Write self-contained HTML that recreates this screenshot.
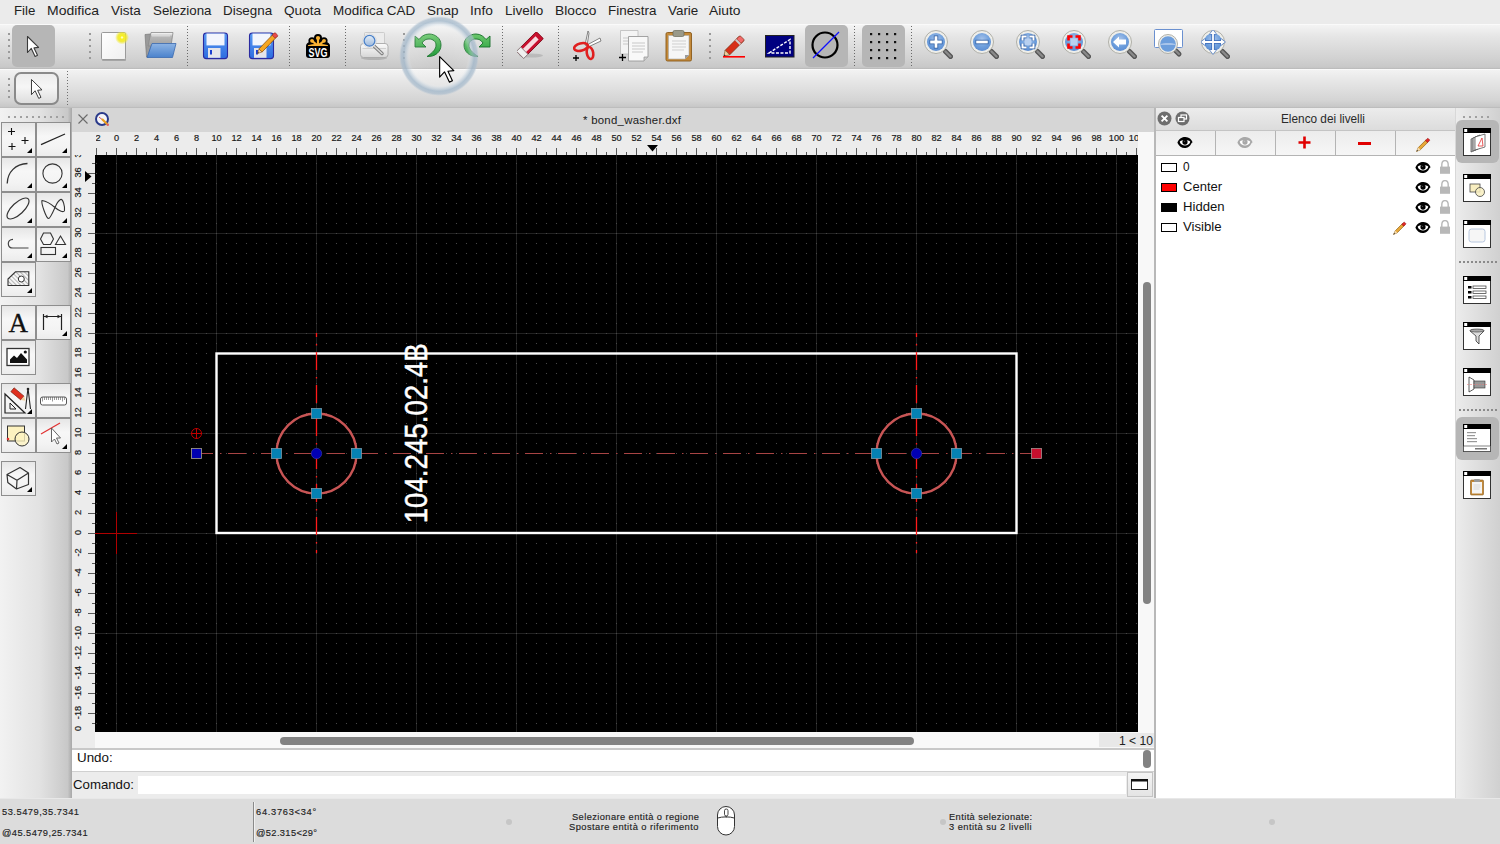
<!DOCTYPE html><html><head><meta charset="utf-8"><style>
*{margin:0;padding:0;box-sizing:border-box}
html,body{width:1500px;height:844px;overflow:hidden;background:#ececec;font-family:"Liberation Sans", sans-serif;position:relative}
.a{position:absolute}
.t{position:absolute;white-space:nowrap;line-height:1}
</style></head><body><div class="a" style="left:0;top:0;width:1500px;height:24px;background:#ebebeb"></div><svg class="a" style="left:11.5px;top:0.2699999999999978px;overflow:visible" width="25.4" height="19.950000000000003"><text x="2" y="14.630000000000003" font-family="Liberation Sans" font-size="13.3" font-weight="normal" fill="#222" textLength="21.4" lengthAdjust="spacingAndGlyphs" >File</text></svg><svg class="a" style="left:44.6px;top:0.2699999999999978px;overflow:visible" width="55.99999999999999" height="19.950000000000003"><text x="2" y="14.630000000000003" font-family="Liberation Sans" font-size="13.3" font-weight="normal" fill="#222" textLength="51.99999999999999" lengthAdjust="spacingAndGlyphs" >Modifica</text></svg><svg class="a" style="left:108.8px;top:0.2699999999999978px;overflow:visible" width="33.8" height="19.950000000000003"><text x="2" y="14.630000000000003" font-family="Liberation Sans" font-size="13.3" font-weight="normal" fill="#222" textLength="29.799999999999997" lengthAdjust="spacingAndGlyphs" >Vista</text></svg><svg class="a" style="left:150.5px;top:0.2699999999999978px;overflow:visible" width="62.5" height="19.950000000000003"><text x="2" y="14.630000000000003" font-family="Liberation Sans" font-size="13.3" font-weight="normal" fill="#222" textLength="58.5" lengthAdjust="spacingAndGlyphs" >Seleziona</text></svg><svg class="a" style="left:220.7px;top:0.2699999999999978px;overflow:visible" width="53.10000000000002" height="19.950000000000003"><text x="2" y="14.630000000000003" font-family="Liberation Sans" font-size="13.3" font-weight="normal" fill="#222" textLength="49.10000000000002" lengthAdjust="spacingAndGlyphs" >Disegna</text></svg><svg class="a" style="left:281.5px;top:0.2699999999999978px;overflow:visible" width="41.10000000000002" height="19.950000000000003"><text x="2" y="14.630000000000003" font-family="Liberation Sans" font-size="13.3" font-weight="normal" fill="#222" textLength="37.10000000000002" lengthAdjust="spacingAndGlyphs" >Quota</text></svg><svg class="a" style="left:330.70000000000005px;top:0.2699999999999978px;overflow:visible" width="86.29999999999995" height="19.950000000000003"><text x="2" y="14.630000000000003" font-family="Liberation Sans" font-size="13.3" font-weight="normal" fill="#222" textLength="82.29999999999995" lengthAdjust="spacingAndGlyphs" >Modifica CAD</text></svg><svg class="a" style="left:424.70000000000005px;top:0.2699999999999978px;overflow:visible" width="35.5" height="19.950000000000003"><text x="2" y="14.630000000000003" font-family="Liberation Sans" font-size="13.3" font-weight="normal" fill="#222" textLength="31.5" lengthAdjust="spacingAndGlyphs" >Snap</text></svg><svg class="a" style="left:467.70000000000005px;top:0.2699999999999978px;overflow:visible" width="26.899999999999977" height="19.950000000000003"><text x="2" y="14.630000000000003" font-family="Liberation Sans" font-size="13.3" font-weight="normal" fill="#222" textLength="22.899999999999977" lengthAdjust="spacingAndGlyphs" >Info</text></svg><svg class="a" style="left:502.70000000000005px;top:0.2699999999999978px;overflow:visible" width="42.299999999999955" height="19.950000000000003"><text x="2" y="14.630000000000003" font-family="Liberation Sans" font-size="13.3" font-weight="normal" fill="#222" textLength="38.299999999999955" lengthAdjust="spacingAndGlyphs" >Livello</text></svg><svg class="a" style="left:552.7px;top:0.2699999999999978px;overflow:visible" width="45.299999999999955" height="19.950000000000003"><text x="2" y="14.630000000000003" font-family="Liberation Sans" font-size="13.3" font-weight="normal" fill="#222" textLength="41.299999999999955" lengthAdjust="spacingAndGlyphs" >Blocco</text></svg><svg class="a" style="left:605.5px;top:0.2699999999999978px;overflow:visible" width="52.5" height="19.950000000000003"><text x="2" y="14.630000000000003" font-family="Liberation Sans" font-size="13.3" font-weight="normal" fill="#222" textLength="48.5" lengthAdjust="spacingAndGlyphs" >Finestra</text></svg><svg class="a" style="left:665.7px;top:0.2699999999999978px;overflow:visible" width="34.299999999999955" height="19.950000000000003"><text x="2" y="14.630000000000003" font-family="Liberation Sans" font-size="13.3" font-weight="normal" fill="#222" textLength="30.299999999999955" lengthAdjust="spacingAndGlyphs" >Varie</text></svg><svg class="a" style="left:707.1px;top:0.2699999999999978px;overflow:visible" width="35.5" height="19.950000000000003"><text x="2" y="14.630000000000003" font-family="Liberation Sans" font-size="13.3" font-weight="normal" fill="#222" textLength="31.5" lengthAdjust="spacingAndGlyphs" >Aiuto</text></svg><div class="a" style="left:0;top:24px;width:1500px;height:45px;background:linear-gradient(#f4f4f4 0%,#e6e6e6 25%,#d2d2d2 75%,#c8c8c8 96%,#b8b8b8 100%);border-top:1px solid #fafafa"></div><div class="a" style="left:0;top:68.5px;width:1500px;height:39.5px;background:linear-gradient(#f2f2f2 0%,#e6e6e6 30%,#d4d4d4 80%,#c8c8c8 96%,#b8b8b8 100%);border-top:1px solid #fafafa"></div><div class="a" style="left:8px;top:33px;width:2px;height:2px;background:#9a9a9a"></div><div class="a" style="left:8px;top:39px;width:2px;height:2px;background:#9a9a9a"></div><div class="a" style="left:8px;top:45px;width:2px;height:2px;background:#9a9a9a"></div><div class="a" style="left:8px;top:51px;width:2px;height:2px;background:#9a9a9a"></div><div class="a" style="left:8px;top:57px;width:2px;height:2px;background:#9a9a9a"></div><div class="a" style="left:12px;top:25px;width:43px;height:42px;border-radius:5px;background:#b6b6b6"></div><svg class="a" style="left:26px;top:34.5px;" width="16" height="23" viewBox="0 0 16 23"><g transform="translate(1,1) scale(1.0)"><path d="M0.5,0.5 L0.5,16.5 L4.3,12.4 L8.1,20.4 L10.5,19.3 L7,11.9 L11.6,11.4 Z" fill="#fff" stroke="#3a3a3a" stroke-width="1.1" stroke-linejoin="round"/></g></svg><div class="a" style="left:89px;top:33px;width:2px;height:2px;background:#9a9a9a"></div><div class="a" style="left:89px;top:39px;width:2px;height:2px;background:#9a9a9a"></div><div class="a" style="left:89px;top:45px;width:2px;height:2px;background:#9a9a9a"></div><div class="a" style="left:89px;top:51px;width:2px;height:2px;background:#9a9a9a"></div><div class="a" style="left:89px;top:57px;width:2px;height:2px;background:#9a9a9a"></div><svg class="a" style="left:101px;top:32px;" width="30" height="30" viewBox="0 0 30 30"><defs><linearGradient id="nd" x1="0" y1="0" x2="1" y2="1"><stop offset="0" stop-color="#ffffff"/><stop offset="1" stop-color="#efefef"/></linearGradient>
<radialGradient id="glow"><stop offset="0" stop-color="#ffffff"/><stop offset="0.25" stop-color="#f8f020"/><stop offset="0.6" stop-color="#f0e820" stop-opacity="0.85"/><stop offset="1" stop-color="#f0e820" stop-opacity="0"/></radialGradient></defs>
<rect x="1" y="27" width="24" height="1.8" rx="0.8" fill="#6a6a6a" opacity="0.55"/>
<rect x="0.5" y="0.5" width="24" height="27" rx="1.2" fill="url(#nd)" stroke="#9a9a9a"/>
<circle cx="21" cy="5.5" r="7" fill="url(#glow)"/></svg><svg class="a" style="left:144px;top:32px;" width="33" height="28" viewBox="0 0 33 28"><defs><linearGradient id="of" x1="0" y1="0" x2="0" y2="1"><stop offset="0" stop-color="#8eb4e4"/><stop offset="1" stop-color="#4a82cc"/></linearGradient>
<linearGradient id="ofp" x1="0" y1="0" x2="0" y2="1"><stop offset="0" stop-color="#ffffff"/><stop offset="0.3" stop-color="#b8b8b8"/><stop offset="1" stop-color="#a0a0a0"/></linearGradient></defs>
<path d="M1,2.5 L6,2 L9,2 L5,25 L2.5,25 Z" fill="#9a9a9a" stroke="#707070" stroke-width="0.6"/>
<path d="M7,0.5 L29,0.5 L27,14 L4,14 Z" fill="url(#ofp)" stroke="#8a8a8a" stroke-width="0.8"/>
<rect x="8" y="3" width="18" height="1.5" fill="#d8d8d8"/>
<path d="M8,11.5 L32,11.5 L28.5,25.5 L3,25.5 Z" fill="url(#of)" stroke="#3a6ab0" stroke-width="0.8"/></svg><svg class="a" style="left:187px;top:26px;" width="1" height="40" viewBox="0 0 1 40"><rect x="0" y="0" width="1" height="1" fill="#6a6a6a"/><rect x="0" y="3" width="1" height="1" fill="#6a6a6a"/><rect x="0" y="6" width="1" height="1" fill="#6a6a6a"/><rect x="0" y="9" width="1" height="1" fill="#6a6a6a"/><rect x="0" y="12" width="1" height="1" fill="#6a6a6a"/><rect x="0" y="15" width="1" height="1" fill="#6a6a6a"/><rect x="0" y="18" width="1" height="1" fill="#6a6a6a"/><rect x="0" y="21" width="1" height="1" fill="#6a6a6a"/><rect x="0" y="24" width="1" height="1" fill="#6a6a6a"/><rect x="0" y="27" width="1" height="1" fill="#6a6a6a"/><rect x="0" y="30" width="1" height="1" fill="#6a6a6a"/><rect x="0" y="33" width="1" height="1" fill="#6a6a6a"/><rect x="0" y="36" width="1" height="1" fill="#6a6a6a"/><rect x="0" y="39" width="1" height="1" fill="#6a6a6a"/></svg><svg class="a" style="left:202px;top:32px;" width="27" height="28" viewBox="0 0 27 28"><defs><linearGradient id="fl" x1="0" y1="0" x2="0" y2="1"><stop offset="0" stop-color="#5b9bf2"/><stop offset="1" stop-color="#2d6ce0"/></linearGradient></defs>
<rect x="1.5" y="1" width="24" height="25.6" rx="2.8" fill="url(#fl)" stroke="#2a2aa0" stroke-width="1.1"/>
<rect x="4.5" y="1.6" width="18" height="11.8" fill="#f2f5fd"/>
<rect x="6" y="16" width="12.5" height="9.8" fill="#e4e4ea"/>
<rect x="8" y="18" width="2" height="4.5" fill="#1c3fd0"/></svg><svg class="a" style="left:248px;top:32px;" width="32" height="28" viewBox="0 0 32 28"><defs><linearGradient id="fl" x1="0" y1="0" x2="0" y2="1"><stop offset="0" stop-color="#5b9bf2"/><stop offset="1" stop-color="#2d6ce0"/></linearGradient></defs>
<rect x="1.5" y="1" width="24" height="25.6" rx="2.8" fill="url(#fl)" stroke="#2a2aa0" stroke-width="1.1"/>
<rect x="4.5" y="1.6" width="18" height="11.8" fill="#f2f5fd"/>
<rect x="6" y="16" width="12.5" height="9.8" fill="#e4e4ea"/>
<rect x="8" y="18" width="2" height="4.5" fill="#1c3fd0"/><g transform="translate(12.5,18.5) rotate(-46)"><rect x="0" y="-2.2" width="22" height="4.4" fill="#f5a623" stroke="#8a4a00" stroke-width="0.7"/><rect x="19" y="-2.2" width="4" height="4.4" rx="1" fill="#e84a4a" stroke="#8a2020" stroke-width="0.5"/><path d="M0,-2.2 L-4,0 L0,2.2 Z" fill="#f0d0a0" stroke="#8a4a00" stroke-width="0.5"/><path d="M-2.8,-0.7 L-4,0 L-2.8,0.7Z" fill="#333"/></g></svg><svg class="a" style="left:289px;top:26px;" width="1" height="40" viewBox="0 0 1 40"><rect x="0" y="0" width="1" height="1" fill="#6a6a6a"/><rect x="0" y="3" width="1" height="1" fill="#6a6a6a"/><rect x="0" y="6" width="1" height="1" fill="#6a6a6a"/><rect x="0" y="9" width="1" height="1" fill="#6a6a6a"/><rect x="0" y="12" width="1" height="1" fill="#6a6a6a"/><rect x="0" y="15" width="1" height="1" fill="#6a6a6a"/><rect x="0" y="18" width="1" height="1" fill="#6a6a6a"/><rect x="0" y="21" width="1" height="1" fill="#6a6a6a"/><rect x="0" y="24" width="1" height="1" fill="#6a6a6a"/><rect x="0" y="27" width="1" height="1" fill="#6a6a6a"/><rect x="0" y="30" width="1" height="1" fill="#6a6a6a"/><rect x="0" y="33" width="1" height="1" fill="#6a6a6a"/><rect x="0" y="36" width="1" height="1" fill="#6a6a6a"/><rect x="0" y="39" width="1" height="1" fill="#6a6a6a"/></svg><svg class="a" style="left:306px;top:34px;" width="24" height="24" viewBox="0 0 24 24"><rect x="0" y="9" width="24" height="15" rx="3" fill="#000"/>
<g fill="#000"><circle cx="12" cy="4" r="4"/><circle cx="6" cy="6.8" r="3.6"/><circle cx="18" cy="6.8" r="3.6"/><path d="M1,11 C1,8 4,7 6,9 L12,5 L18,9 C20,7 23,8 23,11 Z"/></g>
<g fill="#f9b233"><circle cx="12" cy="4" r="2.1"/><circle cx="6" cy="6.8" r="1.9"/><circle cx="18" cy="6.8" r="1.9"/></g>
<path d="M12,4 L12,11 M6,6.8 L11,11 M18,6.8 L13,11" stroke="#f9b233" stroke-width="2.2"/>
<path d="M2,11.2 C6,9.5 18,9.5 22,11.2 L22,12 L2,12 Z" fill="#f9b233"/>
<text x="12" y="23" font-family="Liberation Sans" font-weight="bold" font-size="13.5" fill="#fff" text-anchor="middle" textLength="19" lengthAdjust="spacingAndGlyphs">SVG</text></svg><svg class="a" style="left:345px;top:26px;" width="1" height="40" viewBox="0 0 1 40"><rect x="0" y="0" width="1" height="1" fill="#6a6a6a"/><rect x="0" y="3" width="1" height="1" fill="#6a6a6a"/><rect x="0" y="6" width="1" height="1" fill="#6a6a6a"/><rect x="0" y="9" width="1" height="1" fill="#6a6a6a"/><rect x="0" y="12" width="1" height="1" fill="#6a6a6a"/><rect x="0" y="15" width="1" height="1" fill="#6a6a6a"/><rect x="0" y="18" width="1" height="1" fill="#6a6a6a"/><rect x="0" y="21" width="1" height="1" fill="#6a6a6a"/><rect x="0" y="24" width="1" height="1" fill="#6a6a6a"/><rect x="0" y="27" width="1" height="1" fill="#6a6a6a"/><rect x="0" y="30" width="1" height="1" fill="#6a6a6a"/><rect x="0" y="33" width="1" height="1" fill="#6a6a6a"/><rect x="0" y="36" width="1" height="1" fill="#6a6a6a"/><rect x="0" y="39" width="1" height="1" fill="#6a6a6a"/></svg><svg class="a" style="left:360px;top:32px;" width="29" height="29" viewBox="0 0 29 29"><defs><linearGradient id="pp" x1="0" y1="0" x2="0" y2="1"><stop offset="0" stop-color="#fbfbfb"/><stop offset="1" stop-color="#d6d6d6"/></linearGradient>
<linearGradient id="ppl" x1="0" y1="0" x2="0" y2="1"><stop offset="0" stop-color="#e4eef8"/><stop offset="1" stop-color="#9cb8dc"/></linearGradient></defs>
<ellipse cx="14" cy="26" rx="13" ry="2" fill="#000" opacity="0.15"/>
<rect x="4.5" y="0.5" width="20" height="13" rx="1" fill="#ececec" stroke="#c4c4c4" stroke-width="0.8"/>
<rect x="0.5" y="11.5" width="27.5" height="14" rx="3" fill="url(#pp)" stroke="#a8a8a8" stroke-width="0.9"/>
<path d="M2.5,16.5 L26,16.5" stroke="#c8c8c8" stroke-width="0.8"/>
<path d="M14,14 L22,21.5" stroke="#7a7a7a" stroke-width="3.4" stroke-linecap="round"/><path d="M14,14 L22,21.5" stroke="#d8d8d8" stroke-width="1.6" stroke-linecap="round"/>
<circle cx="9.5" cy="8.8" r="6.9" fill="#f4f4f4" stroke="#c8c8c8" stroke-width="0.5"/>
<circle cx="9.5" cy="8.8" r="5.4" fill="url(#ppl)" stroke="#4a80c8" stroke-width="1.3"/></svg><div class="a" style="left:403px;top:33px;width:2px;height:2px;background:#9a9a9a"></div><div class="a" style="left:403px;top:39px;width:2px;height:2px;background:#9a9a9a"></div><div class="a" style="left:403px;top:45px;width:2px;height:2px;background:#9a9a9a"></div><div class="a" style="left:403px;top:51px;width:2px;height:2px;background:#9a9a9a"></div><div class="a" style="left:403px;top:57px;width:2px;height:2px;background:#9a9a9a"></div><svg class="a" style="left:414px;top:33px;" width="30" height="26" viewBox="0 0 30 26"><defs><linearGradient id="ur" x1="0" y1="0" x2="0" y2="1"><stop offset="0" stop-color="#6cc86c"/><stop offset="1" stop-color="#1e9a38"/></linearGradient></defs>
<g transform=""><path d="M13,23.5 C21,24 27,19 27,12 C27,5 21,1 15,1 C10,1 7,4 5,6.5 L1,3 L1,14 L12,14 L8,10 C10,7 12,6 15,6 C19,6 22,8.5 22,12 C22,16 19,19.5 13,23.5 Z" fill="url(#ur)" stroke="#17702a" stroke-width="0.9"/></g></svg><svg class="a" style="left:461px;top:33px;" width="30" height="26" viewBox="0 0 30 26"><defs><linearGradient id="ur" x1="0" y1="0" x2="0" y2="1"><stop offset="0" stop-color="#6cc86c"/><stop offset="1" stop-color="#1e9a38"/></linearGradient></defs>
<g transform="translate(30,0) scale(-1,1)"><path d="M13,23.5 C21,24 27,19 27,12 C27,5 21,1 15,1 C10,1 7,4 5,6.5 L1,3 L1,14 L12,14 L8,10 C10,7 12,6 15,6 C19,6 22,8.5 22,12 C22,16 19,19.5 13,23.5 Z" fill="url(#ur)" stroke="#17702a" stroke-width="0.9"/></g></svg><svg class="a" style="left:502px;top:26px;" width="1" height="40" viewBox="0 0 1 40"><rect x="0" y="0" width="1" height="1" fill="#6a6a6a"/><rect x="0" y="3" width="1" height="1" fill="#6a6a6a"/><rect x="0" y="6" width="1" height="1" fill="#6a6a6a"/><rect x="0" y="9" width="1" height="1" fill="#6a6a6a"/><rect x="0" y="12" width="1" height="1" fill="#6a6a6a"/><rect x="0" y="15" width="1" height="1" fill="#6a6a6a"/><rect x="0" y="18" width="1" height="1" fill="#6a6a6a"/><rect x="0" y="21" width="1" height="1" fill="#6a6a6a"/><rect x="0" y="24" width="1" height="1" fill="#6a6a6a"/><rect x="0" y="27" width="1" height="1" fill="#6a6a6a"/><rect x="0" y="30" width="1" height="1" fill="#6a6a6a"/><rect x="0" y="33" width="1" height="1" fill="#6a6a6a"/><rect x="0" y="36" width="1" height="1" fill="#6a6a6a"/><rect x="0" y="39" width="1" height="1" fill="#6a6a6a"/></svg><svg class="a" style="left:517px;top:32px;" width="27" height="27" viewBox="0 0 27 27"><ellipse cx="14" cy="23.5" rx="12" ry="2" fill="#000" opacity="0.12"/>
<g transform="translate(13,13) rotate(-45)"><rect x="-14" y="-5" width="28" height="10" rx="1" fill="#c8102e" stroke="#7a0010" stroke-width="0.8"/>
<rect x="-8" y="-2.2" width="18" height="4.4" fill="#fff" opacity="0.85"/>
<rect x="-14" y="-5" width="6" height="10" fill="#f0f0f0" stroke="#888" stroke-width="0.8"/></g></svg><svg class="a" style="left:558px;top:26px;" width="1" height="40" viewBox="0 0 1 40"><rect x="0" y="0" width="1" height="1" fill="#6a6a6a"/><rect x="0" y="3" width="1" height="1" fill="#6a6a6a"/><rect x="0" y="6" width="1" height="1" fill="#6a6a6a"/><rect x="0" y="9" width="1" height="1" fill="#6a6a6a"/><rect x="0" y="12" width="1" height="1" fill="#6a6a6a"/><rect x="0" y="15" width="1" height="1" fill="#6a6a6a"/><rect x="0" y="18" width="1" height="1" fill="#6a6a6a"/><rect x="0" y="21" width="1" height="1" fill="#6a6a6a"/><rect x="0" y="24" width="1" height="1" fill="#6a6a6a"/><rect x="0" y="27" width="1" height="1" fill="#6a6a6a"/><rect x="0" y="30" width="1" height="1" fill="#6a6a6a"/><rect x="0" y="33" width="1" height="1" fill="#6a6a6a"/><rect x="0" y="36" width="1" height="1" fill="#6a6a6a"/><rect x="0" y="39" width="1" height="1" fill="#6a6a6a"/></svg><svg class="a" style="left:573px;top:30px;" width="30" height="32" viewBox="0 0 30 32"><path d="M15,1 L12,15 L14,16 L16,3 Z" fill="#fff" stroke="#666" stroke-width="0.8"/>
<path d="M27,8 L14,15 L15,17 L28,11 Z" fill="#fff" stroke="#666" stroke-width="0.8"/>
<ellipse cx="8" cy="17" rx="7" ry="3.6" fill="none" stroke="#e02020" stroke-width="2.6" transform="rotate(-15 8 17)"/>
<ellipse cx="17" cy="23" rx="3.2" ry="6" fill="none" stroke="#e02020" stroke-width="2.6" transform="rotate(-10 17 23)"/>
<path d="M3,25 L3,31 M0,28 L6,28" stroke="#000" stroke-width="1.3"/></svg><svg class="a" style="left:618px;top:30px;" width="31" height="32" viewBox="0 0 31 32"><path d="M2.5,0.5 L20,0.5 L20,24 L2.5,24 Z" fill="#f4f4f4" stroke="#bbb" stroke-width="0.8"/>
<path d="M10.5,6.5 L30,6.5 L30,27 L26,31 L10.5,31 Z" fill="#f8f8f8" stroke="#9a9a9a" stroke-width="0.9"/>
<path d="M26,31 L26,27 L30,27" fill="#ccc" stroke="#9a9a9a" stroke-width="0.8"/>
<g stroke="#c8c8c8" stroke-width="1"><line x1="14" y1="13" x2="27" y2="13"/><line x1="14" y1="16" x2="27" y2="16"/><line x1="14" y1="19" x2="27" y2="19"/><line x1="14" y1="22" x2="25" y2="22"/>
<line x1="5" y1="8" x2="10" y2="8"/><line x1="5" y1="11" x2="10" y2="11"/><line x1="5" y1="14" x2="10" y2="14"/></g>
<path d="M4.5,24 L4.5,31 M1,27.5 L8,27.5" stroke="#000" stroke-width="1.3"/></svg><svg class="a" style="left:665px;top:30px;" width="28" height="32" viewBox="0 0 28 32"><rect x="1" y="2.5" width="25.5" height="28.5" rx="1.5" fill="#c48a3a" stroke="#8a5a1a" stroke-width="0.9"/>
<path d="M3.5,5.5 L24,5.5 L24,25 L20,29 L3.5,29 Z" fill="#f6f6f6" stroke="#aaa" stroke-width="0.6"/>
<path d="M20,29 L20,25 L24,25" fill="#9a9a9a"/>
<rect x="8" y="0.5" width="11" height="6" rx="1.5" fill="#9a9a8a" stroke="#6a6a5a" stroke-width="0.7"/>
<g stroke="#cfcfcf" stroke-width="1"><line x1="7" y1="11" x2="21" y2="11"/><line x1="7" y1="14" x2="21" y2="14"/><line x1="7" y1="17" x2="21" y2="17"/><line x1="7" y1="20" x2="19" y2="20"/></g></svg><div class="a" style="left:709px;top:33px;width:2px;height:2px;background:#9a9a9a"></div><div class="a" style="left:709px;top:39px;width:2px;height:2px;background:#9a9a9a"></div><div class="a" style="left:709px;top:45px;width:2px;height:2px;background:#9a9a9a"></div><div class="a" style="left:709px;top:51px;width:2px;height:2px;background:#9a9a9a"></div><div class="a" style="left:709px;top:57px;width:2px;height:2px;background:#9a9a9a"></div><svg class="a" style="left:723px;top:35px;" width="24" height="24" viewBox="0 0 24 24"><g transform="translate(3,19) rotate(-45)"><rect x="2" y="-3.2" width="20" height="6.4" fill="#d83018" stroke="#7a2a10" stroke-width="0.7"/>
<rect x="18" y="-3.2" width="5" height="6.4" rx="1" fill="#f06a6a" stroke="#7a2a10" stroke-width="0.6"/><rect x="16" y="-3.2" width="2" height="6.4" fill="#ccc"/>
<path d="M2,-3.2 L-3,0 L2,3.2 Z" fill="#f0d0a0" stroke="#7a4a20" stroke-width="0.6"/><path d="M-1.3,-1 L-3,0 L-1.3,1Z" fill="#222"/></g>
<rect x="0" y="21" width="22" height="1.6" fill="#ff0000"/></svg><svg class="a" style="left:765px;top:35px;" width="30" height="23" viewBox="0 0 30 23"><rect x="0.5" y="0.5" width="28.5" height="21.5" fill="#000080" stroke="#222" stroke-width="1"/>
<path d="M4,18 L25,4.5 L25,18 Z" fill="none" stroke="#fff" stroke-width="1.4" stroke-dasharray="3 1.5"/></svg><div class="a" style="left:805px;top:25px;width:43px;height:42px;border-radius:5px;background:#b6b6b6"></div><svg class="a" style="left:811px;top:31px;" width="30" height="30" viewBox="0 0 30 30"><circle cx="14" cy="14" r="12.5" fill="none" stroke="#000" stroke-width="2.2"/>
<line x1="2" y1="27" x2="28" y2="1" stroke="#1010ff" stroke-width="1.2"/></svg><svg class="a" style="left:854px;top:26px;" width="1" height="40" viewBox="0 0 1 40"><rect x="0" y="0" width="1" height="1" fill="#6a6a6a"/><rect x="0" y="3" width="1" height="1" fill="#6a6a6a"/><rect x="0" y="6" width="1" height="1" fill="#6a6a6a"/><rect x="0" y="9" width="1" height="1" fill="#6a6a6a"/><rect x="0" y="12" width="1" height="1" fill="#6a6a6a"/><rect x="0" y="15" width="1" height="1" fill="#6a6a6a"/><rect x="0" y="18" width="1" height="1" fill="#6a6a6a"/><rect x="0" y="21" width="1" height="1" fill="#6a6a6a"/><rect x="0" y="24" width="1" height="1" fill="#6a6a6a"/><rect x="0" y="27" width="1" height="1" fill="#6a6a6a"/><rect x="0" y="30" width="1" height="1" fill="#6a6a6a"/><rect x="0" y="33" width="1" height="1" fill="#6a6a6a"/><rect x="0" y="36" width="1" height="1" fill="#6a6a6a"/><rect x="0" y="39" width="1" height="1" fill="#6a6a6a"/></svg><div class="a" style="left:862px;top:25px;width:43px;height:42px;border-radius:5px;background:#b6b6b6"></div><svg class="a" style="left:870px;top:33px;" width="28" height="28" viewBox="0 0 28 28"><rect x="0" y="0" width="2.2" height="2.2" fill="#111"/><rect x="0" y="8" width="2.2" height="2.2" fill="#111"/><rect x="0" y="16" width="2.2" height="2.2" fill="#111"/><rect x="0" y="24" width="2.2" height="2.2" fill="#111"/><rect x="8" y="0" width="2.2" height="2.2" fill="#111"/><rect x="8" y="8" width="2.2" height="2.2" fill="#111"/><rect x="8" y="16" width="2.2" height="2.2" fill="#111"/><rect x="8" y="24" width="2.2" height="2.2" fill="#111"/><rect x="16" y="0" width="2.2" height="2.2" fill="#111"/><rect x="16" y="8" width="2.2" height="2.2" fill="#111"/><rect x="16" y="16" width="2.2" height="2.2" fill="#111"/><rect x="16" y="24" width="2.2" height="2.2" fill="#111"/><rect x="24" y="0" width="2.2" height="2.2" fill="#111"/><rect x="24" y="8" width="2.2" height="2.2" fill="#111"/><rect x="24" y="16" width="2.2" height="2.2" fill="#111"/><rect x="24" y="24" width="2.2" height="2.2" fill="#111"/></svg><svg class="a" style="left:911px;top:26px;" width="1" height="40" viewBox="0 0 1 40"><rect x="0" y="0" width="1" height="1" fill="#6a6a6a"/><rect x="0" y="3" width="1" height="1" fill="#6a6a6a"/><rect x="0" y="6" width="1" height="1" fill="#6a6a6a"/><rect x="0" y="9" width="1" height="1" fill="#6a6a6a"/><rect x="0" y="12" width="1" height="1" fill="#6a6a6a"/><rect x="0" y="15" width="1" height="1" fill="#6a6a6a"/><rect x="0" y="18" width="1" height="1" fill="#6a6a6a"/><rect x="0" y="21" width="1" height="1" fill="#6a6a6a"/><rect x="0" y="24" width="1" height="1" fill="#6a6a6a"/><rect x="0" y="27" width="1" height="1" fill="#6a6a6a"/><rect x="0" y="30" width="1" height="1" fill="#6a6a6a"/><rect x="0" y="33" width="1" height="1" fill="#6a6a6a"/><rect x="0" y="36" width="1" height="1" fill="#6a6a6a"/><rect x="0" y="39" width="1" height="1" fill="#6a6a6a"/></svg><svg class="a" style="left:924px;top:30px;" width="29" height="29" viewBox="0 0 29 29"><defs><radialGradient id="zlin" cx="0.5" cy="0.35" r="0.7"><stop offset="0" stop-color="#a8c4ea"/><stop offset="0.6" stop-color="#6d9edc"/><stop offset="1" stop-color="#5a8ad0"/></radialGradient></defs>
<path d="M21.5,21.5 L26.5,26.5" stroke="#555" stroke-width="5" stroke-linecap="round"/>
<path d="M21.5,21.5 L26.5,26.5" stroke="#8a8a8a" stroke-width="2.4" stroke-linecap="round"/>
<circle cx="12" cy="12" r="11.5" fill="#eeeeea" stroke="#a8a8a0" stroke-width="0.9"/>
<circle cx="12" cy="12" r="9" fill="url(#zlin)"/><path d="M12,5.5 L12,18.5 M5.5,12 L18.5,12" stroke="#2a5aa0" stroke-width="4.4"/><path d="M12,6.2 L12,17.8 M6.2,12 L17.8,12" stroke="#fff" stroke-width="2.8"/></svg><svg class="a" style="left:970px;top:30px;" width="29" height="29" viewBox="0 0 29 29"><defs><radialGradient id="zlout" cx="0.5" cy="0.35" r="0.7"><stop offset="0" stop-color="#a8c4ea"/><stop offset="0.6" stop-color="#6d9edc"/><stop offset="1" stop-color="#5a8ad0"/></radialGradient></defs>
<path d="M21.5,21.5 L26.5,26.5" stroke="#555" stroke-width="5" stroke-linecap="round"/>
<path d="M21.5,21.5 L26.5,26.5" stroke="#8a8a8a" stroke-width="2.4" stroke-linecap="round"/>
<circle cx="12" cy="12" r="11.5" fill="#eeeeea" stroke="#a8a8a0" stroke-width="0.9"/>
<circle cx="12" cy="12" r="9" fill="url(#zlout)"/><path d="M5.5,12 L18.5,12" stroke="#2a5aa0" stroke-width="4.4"/><path d="M6.2,12 L17.8,12" stroke="#fff" stroke-width="2.8"/></svg><svg class="a" style="left:1016px;top:30px;" width="29" height="29" viewBox="0 0 29 29"><defs><radialGradient id="zlauto" cx="0.5" cy="0.35" r="0.7"><stop offset="0" stop-color="#a8c4ea"/><stop offset="0.6" stop-color="#6d9edc"/><stop offset="1" stop-color="#5a8ad0"/></radialGradient></defs>
<path d="M21.5,21.5 L26.5,26.5" stroke="#555" stroke-width="5" stroke-linecap="round"/>
<path d="M21.5,21.5 L26.5,26.5" stroke="#8a8a8a" stroke-width="2.4" stroke-linecap="round"/>
<circle cx="12" cy="12" r="11.5" fill="#eeeeea" stroke="#a8a8a0" stroke-width="0.9"/>
<circle cx="12" cy="12" r="9" fill="url(#zlauto)"/><rect x="8.5" y="8.5" width="7" height="7" fill="#b8d0f0"/><path d="M6.5,10.5 L6.5,6.5 L10.5,6.5 M13.5,6.5 L17.5,6.5 L17.5,10.5 M17.5,13.5 L17.5,17.5 L13.5,17.5 M10.5,17.5 L6.5,17.5 L6.5,13.5" fill="none" stroke="#2a5aa0" stroke-width="3.6"/><path d="M6.5,10.5 L6.5,6.5 L10.5,6.5 M13.5,6.5 L17.5,6.5 L17.5,10.5 M17.5,13.5 L17.5,17.5 L13.5,17.5 M10.5,17.5 L6.5,17.5 L6.5,13.5" fill="none" stroke="#fff" stroke-width="2"/></svg><svg class="a" style="left:1062px;top:30px;" width="29" height="29" viewBox="0 0 29 29"><defs><radialGradient id="zlsel" cx="0.5" cy="0.35" r="0.7"><stop offset="0" stop-color="#a8c4ea"/><stop offset="0.6" stop-color="#6d9edc"/><stop offset="1" stop-color="#5a8ad0"/></radialGradient></defs>
<path d="M21.5,21.5 L26.5,26.5" stroke="#555" stroke-width="5" stroke-linecap="round"/>
<path d="M21.5,21.5 L26.5,26.5" stroke="#8a8a8a" stroke-width="2.4" stroke-linecap="round"/>
<circle cx="12" cy="12" r="11.5" fill="#eeeeea" stroke="#a8a8a0" stroke-width="0.9"/>
<circle cx="12" cy="12" r="9" fill="url(#zlsel)"/><rect x="8.5" y="8.5" width="7" height="7" fill="#b8d0f0"/><path d="M6.5,10.5 L6.5,6.5 L10.5,6.5 M13.5,6.5 L17.5,6.5 L17.5,10.5 M17.5,13.5 L17.5,17.5 L13.5,17.5 M10.5,17.5 L6.5,17.5 L6.5,13.5" fill="none" stroke="#ff0000" stroke-width="2.6"/></svg><svg class="a" style="left:1108px;top:30px;" width="29" height="29" viewBox="0 0 29 29"><defs><radialGradient id="zlprev" cx="0.5" cy="0.35" r="0.7"><stop offset="0" stop-color="#a8c4ea"/><stop offset="0.6" stop-color="#6d9edc"/><stop offset="1" stop-color="#5a8ad0"/></radialGradient></defs>
<path d="M21.5,21.5 L26.5,26.5" stroke="#555" stroke-width="5" stroke-linecap="round"/>
<path d="M21.5,21.5 L26.5,26.5" stroke="#8a8a8a" stroke-width="2.4" stroke-linecap="round"/>
<circle cx="12" cy="12" r="11.5" fill="#eeeeea" stroke="#a8a8a0" stroke-width="0.9"/>
<circle cx="12" cy="12" r="9" fill="url(#zlprev)"/><path d="M5,12 L11,6.5 L11,9.5 L18,9.5 L18,14.5 L11,14.5 L11,17.5 Z" fill="#fff"/></svg><svg class="a" style="left:1154px;top:29px;" width="31" height="31" viewBox="0 0 31 31"><rect x="0.5" y="0.5" width="28" height="18" rx="1" fill="#fff" stroke="#6a90d0" stroke-width="1"/>
<path d="M20,20 L25,25" stroke="#555" stroke-width="5" stroke-linecap="round"/><path d="M20,20 L25,25" stroke="#8a8a8a" stroke-width="2.4" stroke-linecap="round"/>
<circle cx="14" cy="15" r="9.5" fill="#eeeeea" stroke="#a8a8a0" stroke-width="0.9"/><circle cx="14" cy="15" r="7.8" fill="#6d9edc"/><path d="M6.5,15 C9,13.5 19,13.5 21.5,15 L21.5,16 L6.5,16 Z" fill="#a8c4ea"/></svg><svg class="a" style="left:1201px;top:30px;" width="29" height="29" viewBox="0 0 29 29"><defs><radialGradient id="zlpan" cx="0.5" cy="0.35" r="0.7"><stop offset="0" stop-color="#a8c4ea"/><stop offset="0.6" stop-color="#6d9edc"/><stop offset="1" stop-color="#5a8ad0"/></radialGradient></defs>
<path d="M21.5,21.5 L26.5,26.5" stroke="#555" stroke-width="5" stroke-linecap="round"/>
<path d="M21.5,21.5 L26.5,26.5" stroke="#8a8a8a" stroke-width="2.4" stroke-linecap="round"/>
<circle cx="12" cy="12" r="11.5" fill="#eeeeea" stroke="#a8a8a0" stroke-width="0.9"/>
<circle cx="12" cy="12" r="9" fill="url(#zlpan)"/><path d="M12,3 L12,21 M3,12 L21,12" stroke="#3a6ab8" stroke-width="3.4"/><path d="M12,0 L15,4 L9,4 Z M12,24 L15,20 L9,20 Z M0,12 L4,9 L4,15 Z M24,12 L20,9 L20,15 Z" fill="#3a6ab8" stroke="#3a6ab8" stroke-width="1.2" stroke-linejoin="round"/><path d="M12,3 L12,21 M3,12 L21,12" stroke="#fff" stroke-width="1.8"/><path d="M12,0 L15,4 L9,4 Z M12,24 L15,20 L9,20 Z M0,12 L4,9 L4,15 Z M24,12 L20,9 L20,15 Z" fill="#fff" stroke="#fff" stroke-width="0.1" stroke-linejoin="round"/></svg><div class="a" style="left:8px;top:78px;width:2px;height:2px;background:#9a9a9a"></div><div class="a" style="left:8px;top:84px;width:2px;height:2px;background:#9a9a9a"></div><div class="a" style="left:8px;top:90px;width:2px;height:2px;background:#9a9a9a"></div><div class="a" style="left:8px;top:96px;width:2px;height:2px;background:#9a9a9a"></div><div class="a" style="left:14px;top:72px;width:44.5px;height:33px;border-radius:7px;border:2px solid #8a8a8a;background:linear-gradient(#ececec,#f6f6f6 45%,#dedede)"></div><svg class="a" style="left:30px;top:78px;" width="15" height="21" viewBox="0 0 15 21"><g transform="translate(1,1) scale(0.95)"><path d="M0.5,0.5 L0.5,16.5 L4.3,12.4 L8.1,20.4 L10.5,19.3 L7,11.9 L11.6,11.4 Z" fill="#fff" stroke="#333" stroke-width="1.0" stroke-linejoin="round"/></g></svg><svg class="a" style="left:67px;top:71px;" width="1" height="35" viewBox="0 0 1 35"><rect x="0" y="0" width="1" height="1" fill="#707070"/><rect x="0" y="3" width="1" height="1" fill="#707070"/><rect x="0" y="6" width="1" height="1" fill="#707070"/><rect x="0" y="9" width="1" height="1" fill="#707070"/><rect x="0" y="12" width="1" height="1" fill="#707070"/><rect x="0" y="15" width="1" height="1" fill="#707070"/><rect x="0" y="18" width="1" height="1" fill="#707070"/><rect x="0" y="21" width="1" height="1" fill="#707070"/><rect x="0" y="24" width="1" height="1" fill="#707070"/><rect x="0" y="27" width="1" height="1" fill="#707070"/><rect x="0" y="30" width="1" height="1" fill="#707070"/><rect x="0" y="33" width="1" height="1" fill="#707070"/></svg><div class="a" style="left:0;top:108px;width:72px;height:691px;background:linear-gradient(90deg,#f2f2f2 0%,#e2e2e2 55%,#c8c8c8 94%,#a8a8a8 100%)"></div><div class="a" style="left:8px;top:116px;width:2px;height:2px;background:#a0a0a0"></div><div class="a" style="left:14px;top:116px;width:2px;height:2px;background:#a0a0a0"></div><div class="a" style="left:20px;top:116px;width:2px;height:2px;background:#a0a0a0"></div><div class="a" style="left:26px;top:116px;width:2px;height:2px;background:#a0a0a0"></div><div class="a" style="left:32px;top:116px;width:2px;height:2px;background:#a0a0a0"></div><div class="a" style="left:38px;top:116px;width:2px;height:2px;background:#a0a0a0"></div><div class="a" style="left:44px;top:116px;width:2px;height:2px;background:#a0a0a0"></div><div class="a" style="left:50px;top:116px;width:2px;height:2px;background:#a0a0a0"></div><div class="a" style="left:56px;top:116px;width:2px;height:2px;background:#a0a0a0"></div><div class="a" style="left:62px;top:116px;width:2px;height:2px;background:#a0a0a0"></div><div class="a" style="left:1px;top:122px;width:35px;height:35px;border:1px solid #8e8e8e;background:linear-gradient(#e6e6e6,#f7f7f7 40%,#f3f3f3 75%,#ececec)"></div><svg class="a" style="left:1px;top:122px;" width="35" height="35" viewBox="0 0 35 35"><g stroke="#111" stroke-width="1.1"><path d="M10.5,6 L10.5,13 M7,9.5 L14,9.5"/><path d="M24,15 L24,22 M20.5,18.5 L27.5,18.5"/><path d="M11,21 L11,28 M7.5,24.5 L14.5,24.5"/></g><path d="M31,26 L31,31 L26,31 Z" fill="#000"/></svg><div class="a" style="left:36px;top:122px;width:35px;height:35px;border:1px solid #8e8e8e;background:linear-gradient(#e6e6e6,#f7f7f7 40%,#f3f3f3 75%,#ececec)"></div><svg class="a" style="left:36px;top:122px;" width="35" height="35" viewBox="0 0 35 35"><path d="M5,22.6 L29,12" stroke="#222" stroke-width="1.2"/><path d="M31,26 L31,31 L26,31 Z" fill="#000"/></svg><div class="a" style="left:1px;top:157px;width:35px;height:35px;border:1px solid #8e8e8e;background:linear-gradient(#e6e6e6,#f7f7f7 40%,#f3f3f3 75%,#ececec)"></div><svg class="a" style="left:1px;top:157px;" width="35" height="35" viewBox="0 0 35 35"><path d="M6.2,26.5 C6.5,15 14.5,7 26.5,6.5" fill="none" stroke="#333" stroke-width="1.3"/><path d="M31,26 L31,31 L26,31 Z" fill="#000"/></svg><div class="a" style="left:36px;top:157px;width:35px;height:35px;border:1px solid #8e8e8e;background:linear-gradient(#e6e6e6,#f7f7f7 40%,#f3f3f3 75%,#ececec)"></div><svg class="a" style="left:36px;top:157px;" width="35" height="35" viewBox="0 0 35 35"><circle cx="16.5" cy="16.5" r="9.6" fill="none" stroke="#333" stroke-width="1.1"/><path d="M31,26 L31,31 L26,31 Z" fill="#000"/></svg><div class="a" style="left:1px;top:192px;width:35px;height:35px;border:1px solid #8e8e8e;background:linear-gradient(#e6e6e6,#f7f7f7 40%,#f3f3f3 75%,#ececec)"></div><svg class="a" style="left:1px;top:192px;" width="35" height="35" viewBox="0 0 35 35"><ellipse cx="17" cy="16.5" rx="14" ry="5.8" transform="rotate(-43 17 16.5)" fill="none" stroke="#333" stroke-width="1.2"/><path d="M31,26 L31,31 L26,31 Z" fill="#000"/></svg><div class="a" style="left:36px;top:192px;width:35px;height:35px;border:1px solid #8e8e8e;background:linear-gradient(#e6e6e6,#f7f7f7 40%,#f3f3f3 75%,#ececec)"></div><svg class="a" style="left:36px;top:192px;" width="35" height="35" viewBox="0 0 35 35"><path d="M6,8.5 C10,9 15,12 19,15.5 C23,19 28,21 28.5,18.5 C29,15 27,6 24.5,7.5 C22,9 20,13 19,15.5 C17,20 14,27 12.5,26.5 C10,26 5,11 6,8.5 Z" fill="none" stroke="#333" stroke-width="1.1"/><path d="M31,26 L31,31 L26,31 Z" fill="#000"/></svg><div class="a" style="left:1px;top:227px;width:35px;height:35px;border:1px solid #8e8e8e;background:linear-gradient(#e6e6e6,#f7f7f7 40%,#f3f3f3 75%,#ececec)"></div><svg class="a" style="left:1px;top:227px;" width="35" height="35" viewBox="0 0 35 35"><path d="M12,12.3 C5.5,12.3 6,21 12,21 L27.5,21" fill="none" stroke="#444" stroke-width="1.2"/><path d="M31,26 L31,31 L26,31 Z" fill="#000"/></svg><div class="a" style="left:36px;top:227px;width:35px;height:35px;border:1px solid #8e8e8e;background:linear-gradient(#e6e6e6,#f7f7f7 40%,#f3f3f3 75%,#ececec)"></div><svg class="a" style="left:36px;top:227px;" width="35" height="35" viewBox="0 0 35 35"><path d="M4.5,12 L7.5,6 L14.5,6 L17.5,12 L14.5,17.5 L7.5,17.5 Z" fill="none" stroke="#333" stroke-width="1.1"/><path d="M19.5,17.5 L24.5,9 L29.5,17.5 Z" fill="none" stroke="#333" stroke-width="1.1"/><rect x="5" y="20.5" width="14.5" height="7" fill="none" stroke="#333" stroke-width="1.1"/><path d="M31,26 L31,31 L26,31 Z" fill="#000"/></svg><div class="a" style="left:1px;top:262px;width:35px;height:35px;border:1px solid #8e8e8e;background:linear-gradient(#e6e6e6,#f7f7f7 40%,#f3f3f3 75%,#ececec)"></div><svg class="a" style="left:1px;top:262px;" width="35" height="35" viewBox="0 0 35 35"><defs><pattern id="hp" width="3" height="3" patternUnits="userSpaceOnUse" patternTransform="rotate(-45)"><line x1="0" y1="0" x2="0" y2="3" stroke="#555" stroke-width="0.8"/></pattern></defs><path d="M7,17 L14.5,9.8 L27.8,9.8 L27.8,23.5 L7,23.5 Z" fill="url(#hp)" stroke="#333" stroke-width="1.1"/><circle cx="20.3" cy="17" r="3" fill="#fff" stroke="#333" stroke-width="1"/><path d="M31,26 L31,31 L26,31 Z" fill="#000"/></svg><div class="a" style="left:1px;top:305px;width:35px;height:35px;border:1px solid #8e8e8e;background:linear-gradient(#e6e6e6,#f7f7f7 40%,#f3f3f3 75%,#ececec)"></div><svg class="a" style="left:1px;top:305px;" width="35" height="35" viewBox="0 0 35 35"><text x="17.3" y="26.8" font-family="Liberation Serif" font-size="27" text-anchor="middle" fill="#111" stroke="#111" stroke-width="0.3">A</text></svg><div class="a" style="left:36px;top:305px;width:35px;height:35px;border:1px solid #8e8e8e;background:linear-gradient(#e6e6e6,#f7f7f7 40%,#f3f3f3 75%,#ececec)"></div><svg class="a" style="left:36px;top:305px;" width="35" height="35" viewBox="0 0 35 35"><path d="M7.5,9 L7.5,25 M25.5,9 L25.5,25 M8,11.5 L25,11.5" stroke="#222" stroke-width="1.2" fill="none"/><path d="M8,11.5 L11.5,9.8 L11.5,13.2 Z M25,11.5 L21.5,9.8 L21.5,13.2 Z" fill="#222"/><path d="M31,26 L31,31 L26,31 Z" fill="#000"/></svg><div class="a" style="left:1px;top:340px;width:35px;height:35px;border:1px solid #8e8e8e;background:linear-gradient(#e6e6e6,#f7f7f7 40%,#f3f3f3 75%,#ececec)"></div><svg class="a" style="left:1px;top:340px;" width="35" height="35" viewBox="0 0 35 35"><rect x="6" y="8.5" width="22" height="17" fill="#fff" stroke="#333" stroke-width="1.3"/><path d="M9,23 L9,19.5 L13,15.5 L16,18 L20,13 L26,19.5 L26,23 Z" fill="#111"/><circle cx="24.3" cy="12" r="1.6" fill="#111"/></svg><div class="a" style="left:1px;top:383px;width:35px;height:35px;border:1px solid #8e8e8e;background:linear-gradient(#e6e6e6,#f7f7f7 40%,#f3f3f3 75%,#ececec)"></div><svg class="a" style="left:1px;top:383px;" width="35" height="35" viewBox="0 0 35 35"><path d="M4,30 L4,11 L24,30 Z" fill="none" stroke="#222" stroke-width="1.2"/><path d="M9,26 L9,20 L15,26 Z" fill="none" stroke="#222" stroke-width="1"/><g transform="translate(13,8) rotate(40)"><rect x="-2" y="-2.5" width="13" height="5" fill="#e03020" stroke="#6a2010" stroke-width="0.6"/><path d="M11,-2.5 L15,0 L11,2.5 Z" fill="#f0d0a0"/></g><path d="M27,5 L24.5,26 M27,5 L29.5,26" stroke="#222" stroke-width="1.1" fill="none"/><circle cx="27" cy="6" r="1.3" fill="#222"/><path d="M31,26 L31,31 L26,31 Z" fill="#000"/></svg><div class="a" style="left:36px;top:383px;width:35px;height:35px;border:1px solid #8e8e8e;background:linear-gradient(#e6e6e6,#f7f7f7 40%,#f3f3f3 75%,#ececec)"></div><svg class="a" style="left:36px;top:383px;" width="35" height="35" viewBox="0 0 35 35"><rect x="4.5" y="14" width="26" height="8" rx="2" fill="#fff" stroke="#555" stroke-width="1"/><g stroke="#555" stroke-width="0.6"><line x1="6.5" y1="14" x2="6.5" y2="18.5"/><line x1="8.5" y1="14" x2="8.5" y2="17"/><line x1="10.5" y1="14" x2="10.5" y2="17"/><line x1="12.5" y1="14" x2="12.5" y2="17"/><line x1="14.5" y1="14" x2="14.5" y2="17"/><line x1="16.5" y1="14" x2="16.5" y2="18.5"/><line x1="18.5" y1="14" x2="18.5" y2="17"/><line x1="20.5" y1="14" x2="20.5" y2="17"/><line x1="22.5" y1="14" x2="22.5" y2="17"/><line x1="24.5" y1="14" x2="24.5" y2="17"/><line x1="26.5" y1="14" x2="26.5" y2="18.5"/><line x1="28.5" y1="14" x2="28.5" y2="17"/></g></svg><div class="a" style="left:1px;top:418px;width:35px;height:35px;border:1px solid #8e8e8e;background:linear-gradient(#e6e6e6,#f7f7f7 40%,#f3f3f3 75%,#ececec)"></div><svg class="a" style="left:1px;top:418px;" width="35" height="35" viewBox="0 0 35 35"><rect x="6.5" y="8" width="17" height="15" fill="#fdf2c0" stroke="#333" stroke-width="1"/><circle cx="21" cy="21" r="7" fill="#fdf2c0" fill-opacity="0.8" stroke="#333" stroke-width="1"/><circle cx="7" cy="21" r="1.3" fill="#e03030"/></svg><div class="a" style="left:36px;top:418px;width:35px;height:35px;border:1px solid #8e8e8e;background:linear-gradient(#e6e6e6,#f7f7f7 40%,#f3f3f3 75%,#ececec)"></div><svg class="a" style="left:36px;top:418px;" width="35" height="35" viewBox="0 0 35 35"><path d="M5,16 L24,5" stroke="#e03030" stroke-width="1.2"/><path d="M15.5,10 L15.5,24 L18.5,21 L21,26 L23,25 L20.5,20 L24.5,20 Z" fill="#fff" stroke="#555" stroke-width="0.9"/><path d="M31,26 L31,31 L26,31 Z" fill="#000"/></svg><div class="a" style="left:1px;top:461px;width:35px;height:35px;border:1px solid #8e8e8e;background:linear-gradient(#e6e6e6,#f7f7f7 40%,#f3f3f3 75%,#ececec)"></div><svg class="a" style="left:1px;top:461px;" width="35" height="35" viewBox="0 0 35 35"><path d="M6,13.5 L19,6.5 L27.5,12 L27.5,23.5 L15.5,28 L6.8,21.5 Z M6,13.5 L16,19.3 L27.5,12 M16,19.3 L15.5,28" fill="none" stroke="#333" stroke-width="1.2" stroke-linejoin="round"/><path d="M31,26 L31,31 L26,31 Z" fill="#000"/></svg><div class="a" style="left:72px;top:108px;width:1083px;height:640px;background:#d6d6d6"></div><div class="a" style="left:72px;top:132px;width:1066px;height:23px;background:#ececec"></div><div class="a" style="left:72px;top:155px;width:23px;height:593px;background:#ececec"></div><svg width="1043" height="577" style="position:absolute;left:95px;top:155px;background:#000"><g transform="translate(-95,-155)"><line x1="116.5" y1="155" x2="116.5" y2="732" stroke="#222222" stroke-width="1"/><line x1="216.5" y1="155" x2="216.5" y2="732" stroke="#222222" stroke-width="1"/><line x1="316.5" y1="155" x2="316.5" y2="732" stroke="#222222" stroke-width="1"/><line x1="416.5" y1="155" x2="416.5" y2="732" stroke="#222222" stroke-width="1"/><line x1="516.5" y1="155" x2="516.5" y2="732" stroke="#222222" stroke-width="1"/><line x1="616.5" y1="155" x2="616.5" y2="732" stroke="#222222" stroke-width="1"/><line x1="716.5" y1="155" x2="716.5" y2="732" stroke="#222222" stroke-width="1"/><line x1="816.5" y1="155" x2="816.5" y2="732" stroke="#222222" stroke-width="1"/><line x1="916.5" y1="155" x2="916.5" y2="732" stroke="#222222" stroke-width="1"/><line x1="1016.5" y1="155" x2="1016.5" y2="732" stroke="#222222" stroke-width="1"/><line x1="1116.5" y1="155" x2="1116.5" y2="732" stroke="#222222" stroke-width="1"/><line x1="95" y1="633.5" x2="1138" y2="633.5" stroke="#222222" stroke-width="1"/><line x1="95" y1="533.5" x2="1138" y2="533.5" stroke="#222222" stroke-width="1"/><line x1="95" y1="433.5" x2="1138" y2="433.5" stroke="#222222" stroke-width="1"/><line x1="95" y1="333.5" x2="1138" y2="333.5" stroke="#222222" stroke-width="1"/><line x1="95" y1="233.5" x2="1138" y2="233.5" stroke="#222222" stroke-width="1"/><defs><pattern id="dots" x="116" y="533" width="10" height="10" patternUnits="userSpaceOnUse"><rect x="0" y="0" width="1" height="1" fill="#484848"/></pattern></defs><rect x="95" y="155" width="1043" height="577" fill="url(#dots)"/><line x1="116.5" y1="512" x2="116.5" y2="554" stroke="#b00000" stroke-width="1"/><line x1="95" y1="533.5" x2="137" y2="533.5" stroke="#b00000" stroke-width="1"/><rect x="216.5" y="353.5" width="800" height="179.5" fill="none" stroke="#ffffff" stroke-width="2.4"/><line x1="316.5" y1="333" x2="316.5" y2="553" stroke="#ff1a1a" stroke-width="1.3" stroke-dasharray="18 7 1.5 6.5" stroke-dashoffset="14"/><line x1="916.5" y1="333" x2="916.5" y2="553" stroke="#ff1a1a" stroke-width="1.3" stroke-dasharray="18 7 1.5 6.5" stroke-dashoffset="14"/><line x1="195" y1="453.5" x2="1036" y2="453.5" stroke="#a84444" stroke-width="1.05" stroke-dasharray="18 7 1.5 6.5" stroke-dashoffset="0"/><circle cx="316.5" cy="453.5" r="40" fill="none" stroke="#c85555" stroke-width="2.4"/><circle cx="916.5" cy="453.5" r="40" fill="none" stroke="#c85555" stroke-width="2.4"/><text transform="translate(426.8,523.3) rotate(-90)" x="0" y="0" font-size="30.5" textLength="180" lengthAdjust="spacingAndGlyphs" fill="#ffffff" stroke="#ffffff" stroke-width="0.5" font-family="Liberation Sans">104.245.02.4B</text><rect x="311.5" y="408.5" width="10" height="10" fill="#0582b4" stroke="#7a9aa8" stroke-width="0.8"/><rect x="271.5" y="448.5" width="10" height="10" fill="#0582b4" stroke="#7a9aa8" stroke-width="0.8"/><rect x="351.5" y="448.5" width="10" height="10" fill="#0582b4" stroke="#7a9aa8" stroke-width="0.8"/><rect x="311.5" y="488.5" width="10" height="10" fill="#0582b4" stroke="#7a9aa8" stroke-width="0.8"/><circle cx="316.5" cy="453.5" r="5.2" fill="#0000b4" stroke="#3a3ab0" stroke-width="0.6"/><rect x="911.5" y="408.5" width="10" height="10" fill="#0582b4" stroke="#7a9aa8" stroke-width="0.8"/><rect x="871.5" y="448.5" width="10" height="10" fill="#0582b4" stroke="#7a9aa8" stroke-width="0.8"/><rect x="951.5" y="448.5" width="10" height="10" fill="#0582b4" stroke="#7a9aa8" stroke-width="0.8"/><rect x="911.5" y="488.5" width="10" height="10" fill="#0582b4" stroke="#7a9aa8" stroke-width="0.8"/><circle cx="916.5" cy="453.5" r="5.2" fill="#0000b4" stroke="#3a3ab0" stroke-width="0.6"/><rect x="191.5" y="448.5" width="10" height="10" fill="#0000b0" stroke="#a8a290" stroke-width="0.8"/><rect x="1031.5" y="448.5" width="10" height="10" fill="#c8102e" stroke="#a89090" stroke-width="0.8"/><circle cx="196.5" cy="433.5" r="5" fill="none" stroke="#c00000" stroke-width="1"/><line x1="196.5" y1="428" x2="196.5" y2="439" stroke="#c00000" stroke-width="1"/><line x1="191" y1="433.5" x2="202" y2="433.5" stroke="#c00000" stroke-width="1"/></g></svg><svg width="1069" height="24" style="position:absolute;left:72px;top:131px"><defs><clipPath id="hr"><rect x="96" y="131" width="1045" height="24"/></clipPath></defs><g clip-path="url(#hr)" transform="translate(-72,-131)"><line x1="76.5" y1="148" x2="76.5" y2="155" stroke="#5a5a5a" stroke-width="1"/><text x="76.5" y="140.8" font-size="9.2" text-anchor="middle" fill="#1a1a1a" stroke="#1a1a1a" stroke-width="0.2" font-family="Liberation Sans">-4</text><line x1="86.5" y1="152" x2="86.5" y2="155" stroke="#5a5a5a" stroke-width="1"/><line x1="96.5" y1="148" x2="96.5" y2="155" stroke="#5a5a5a" stroke-width="1"/><text x="96.5" y="140.8" font-size="9.2" text-anchor="middle" fill="#1a1a1a" stroke="#1a1a1a" stroke-width="0.2" font-family="Liberation Sans">-2</text><line x1="106.5" y1="152" x2="106.5" y2="155" stroke="#5a5a5a" stroke-width="1"/><line x1="116.5" y1="148" x2="116.5" y2="155" stroke="#5a5a5a" stroke-width="1"/><text x="116.5" y="140.8" font-size="9.2" text-anchor="middle" fill="#1a1a1a" stroke="#1a1a1a" stroke-width="0.2" font-family="Liberation Sans">0</text><line x1="126.5" y1="152" x2="126.5" y2="155" stroke="#5a5a5a" stroke-width="1"/><line x1="136.5" y1="148" x2="136.5" y2="155" stroke="#5a5a5a" stroke-width="1"/><text x="136.5" y="140.8" font-size="9.2" text-anchor="middle" fill="#1a1a1a" stroke="#1a1a1a" stroke-width="0.2" font-family="Liberation Sans">2</text><line x1="146.5" y1="152" x2="146.5" y2="155" stroke="#5a5a5a" stroke-width="1"/><line x1="156.5" y1="148" x2="156.5" y2="155" stroke="#5a5a5a" stroke-width="1"/><text x="156.5" y="140.8" font-size="9.2" text-anchor="middle" fill="#1a1a1a" stroke="#1a1a1a" stroke-width="0.2" font-family="Liberation Sans">4</text><line x1="166.5" y1="152" x2="166.5" y2="155" stroke="#5a5a5a" stroke-width="1"/><line x1="176.5" y1="148" x2="176.5" y2="155" stroke="#5a5a5a" stroke-width="1"/><text x="176.5" y="140.8" font-size="9.2" text-anchor="middle" fill="#1a1a1a" stroke="#1a1a1a" stroke-width="0.2" font-family="Liberation Sans">6</text><line x1="186.5" y1="152" x2="186.5" y2="155" stroke="#5a5a5a" stroke-width="1"/><line x1="196.5" y1="148" x2="196.5" y2="155" stroke="#5a5a5a" stroke-width="1"/><text x="196.5" y="140.8" font-size="9.2" text-anchor="middle" fill="#1a1a1a" stroke="#1a1a1a" stroke-width="0.2" font-family="Liberation Sans">8</text><line x1="206.5" y1="152" x2="206.5" y2="155" stroke="#5a5a5a" stroke-width="1"/><line x1="216.5" y1="148" x2="216.5" y2="155" stroke="#5a5a5a" stroke-width="1"/><text x="216.5" y="140.8" font-size="9.2" text-anchor="middle" fill="#1a1a1a" stroke="#1a1a1a" stroke-width="0.2" font-family="Liberation Sans">10</text><line x1="226.5" y1="152" x2="226.5" y2="155" stroke="#5a5a5a" stroke-width="1"/><line x1="236.5" y1="148" x2="236.5" y2="155" stroke="#5a5a5a" stroke-width="1"/><text x="236.5" y="140.8" font-size="9.2" text-anchor="middle" fill="#1a1a1a" stroke="#1a1a1a" stroke-width="0.2" font-family="Liberation Sans">12</text><line x1="246.5" y1="152" x2="246.5" y2="155" stroke="#5a5a5a" stroke-width="1"/><line x1="256.5" y1="148" x2="256.5" y2="155" stroke="#5a5a5a" stroke-width="1"/><text x="256.5" y="140.8" font-size="9.2" text-anchor="middle" fill="#1a1a1a" stroke="#1a1a1a" stroke-width="0.2" font-family="Liberation Sans">14</text><line x1="266.5" y1="152" x2="266.5" y2="155" stroke="#5a5a5a" stroke-width="1"/><line x1="276.5" y1="148" x2="276.5" y2="155" stroke="#5a5a5a" stroke-width="1"/><text x="276.5" y="140.8" font-size="9.2" text-anchor="middle" fill="#1a1a1a" stroke="#1a1a1a" stroke-width="0.2" font-family="Liberation Sans">16</text><line x1="286.5" y1="152" x2="286.5" y2="155" stroke="#5a5a5a" stroke-width="1"/><line x1="296.5" y1="148" x2="296.5" y2="155" stroke="#5a5a5a" stroke-width="1"/><text x="296.5" y="140.8" font-size="9.2" text-anchor="middle" fill="#1a1a1a" stroke="#1a1a1a" stroke-width="0.2" font-family="Liberation Sans">18</text><line x1="306.5" y1="152" x2="306.5" y2="155" stroke="#5a5a5a" stroke-width="1"/><line x1="316.5" y1="148" x2="316.5" y2="155" stroke="#5a5a5a" stroke-width="1"/><text x="316.5" y="140.8" font-size="9.2" text-anchor="middle" fill="#1a1a1a" stroke="#1a1a1a" stroke-width="0.2" font-family="Liberation Sans">20</text><line x1="326.5" y1="152" x2="326.5" y2="155" stroke="#5a5a5a" stroke-width="1"/><line x1="336.5" y1="148" x2="336.5" y2="155" stroke="#5a5a5a" stroke-width="1"/><text x="336.5" y="140.8" font-size="9.2" text-anchor="middle" fill="#1a1a1a" stroke="#1a1a1a" stroke-width="0.2" font-family="Liberation Sans">22</text><line x1="346.5" y1="152" x2="346.5" y2="155" stroke="#5a5a5a" stroke-width="1"/><line x1="356.5" y1="148" x2="356.5" y2="155" stroke="#5a5a5a" stroke-width="1"/><text x="356.5" y="140.8" font-size="9.2" text-anchor="middle" fill="#1a1a1a" stroke="#1a1a1a" stroke-width="0.2" font-family="Liberation Sans">24</text><line x1="366.5" y1="152" x2="366.5" y2="155" stroke="#5a5a5a" stroke-width="1"/><line x1="376.5" y1="148" x2="376.5" y2="155" stroke="#5a5a5a" stroke-width="1"/><text x="376.5" y="140.8" font-size="9.2" text-anchor="middle" fill="#1a1a1a" stroke="#1a1a1a" stroke-width="0.2" font-family="Liberation Sans">26</text><line x1="386.5" y1="152" x2="386.5" y2="155" stroke="#5a5a5a" stroke-width="1"/><line x1="396.5" y1="148" x2="396.5" y2="155" stroke="#5a5a5a" stroke-width="1"/><text x="396.5" y="140.8" font-size="9.2" text-anchor="middle" fill="#1a1a1a" stroke="#1a1a1a" stroke-width="0.2" font-family="Liberation Sans">28</text><line x1="406.5" y1="152" x2="406.5" y2="155" stroke="#5a5a5a" stroke-width="1"/><line x1="416.5" y1="148" x2="416.5" y2="155" stroke="#5a5a5a" stroke-width="1"/><text x="416.5" y="140.8" font-size="9.2" text-anchor="middle" fill="#1a1a1a" stroke="#1a1a1a" stroke-width="0.2" font-family="Liberation Sans">30</text><line x1="426.5" y1="152" x2="426.5" y2="155" stroke="#5a5a5a" stroke-width="1"/><line x1="436.5" y1="148" x2="436.5" y2="155" stroke="#5a5a5a" stroke-width="1"/><text x="436.5" y="140.8" font-size="9.2" text-anchor="middle" fill="#1a1a1a" stroke="#1a1a1a" stroke-width="0.2" font-family="Liberation Sans">32</text><line x1="446.5" y1="152" x2="446.5" y2="155" stroke="#5a5a5a" stroke-width="1"/><line x1="456.5" y1="148" x2="456.5" y2="155" stroke="#5a5a5a" stroke-width="1"/><text x="456.5" y="140.8" font-size="9.2" text-anchor="middle" fill="#1a1a1a" stroke="#1a1a1a" stroke-width="0.2" font-family="Liberation Sans">34</text><line x1="466.5" y1="152" x2="466.5" y2="155" stroke="#5a5a5a" stroke-width="1"/><line x1="476.5" y1="148" x2="476.5" y2="155" stroke="#5a5a5a" stroke-width="1"/><text x="476.5" y="140.8" font-size="9.2" text-anchor="middle" fill="#1a1a1a" stroke="#1a1a1a" stroke-width="0.2" font-family="Liberation Sans">36</text><line x1="486.5" y1="152" x2="486.5" y2="155" stroke="#5a5a5a" stroke-width="1"/><line x1="496.5" y1="148" x2="496.5" y2="155" stroke="#5a5a5a" stroke-width="1"/><text x="496.5" y="140.8" font-size="9.2" text-anchor="middle" fill="#1a1a1a" stroke="#1a1a1a" stroke-width="0.2" font-family="Liberation Sans">38</text><line x1="506.5" y1="152" x2="506.5" y2="155" stroke="#5a5a5a" stroke-width="1"/><line x1="516.5" y1="148" x2="516.5" y2="155" stroke="#5a5a5a" stroke-width="1"/><text x="516.5" y="140.8" font-size="9.2" text-anchor="middle" fill="#1a1a1a" stroke="#1a1a1a" stroke-width="0.2" font-family="Liberation Sans">40</text><line x1="526.5" y1="152" x2="526.5" y2="155" stroke="#5a5a5a" stroke-width="1"/><line x1="536.5" y1="148" x2="536.5" y2="155" stroke="#5a5a5a" stroke-width="1"/><text x="536.5" y="140.8" font-size="9.2" text-anchor="middle" fill="#1a1a1a" stroke="#1a1a1a" stroke-width="0.2" font-family="Liberation Sans">42</text><line x1="546.5" y1="152" x2="546.5" y2="155" stroke="#5a5a5a" stroke-width="1"/><line x1="556.5" y1="148" x2="556.5" y2="155" stroke="#5a5a5a" stroke-width="1"/><text x="556.5" y="140.8" font-size="9.2" text-anchor="middle" fill="#1a1a1a" stroke="#1a1a1a" stroke-width="0.2" font-family="Liberation Sans">44</text><line x1="566.5" y1="152" x2="566.5" y2="155" stroke="#5a5a5a" stroke-width="1"/><line x1="576.5" y1="148" x2="576.5" y2="155" stroke="#5a5a5a" stroke-width="1"/><text x="576.5" y="140.8" font-size="9.2" text-anchor="middle" fill="#1a1a1a" stroke="#1a1a1a" stroke-width="0.2" font-family="Liberation Sans">46</text><line x1="586.5" y1="152" x2="586.5" y2="155" stroke="#5a5a5a" stroke-width="1"/><line x1="596.5" y1="148" x2="596.5" y2="155" stroke="#5a5a5a" stroke-width="1"/><text x="596.5" y="140.8" font-size="9.2" text-anchor="middle" fill="#1a1a1a" stroke="#1a1a1a" stroke-width="0.2" font-family="Liberation Sans">48</text><line x1="606.5" y1="152" x2="606.5" y2="155" stroke="#5a5a5a" stroke-width="1"/><line x1="616.5" y1="148" x2="616.5" y2="155" stroke="#5a5a5a" stroke-width="1"/><text x="616.5" y="140.8" font-size="9.2" text-anchor="middle" fill="#1a1a1a" stroke="#1a1a1a" stroke-width="0.2" font-family="Liberation Sans">50</text><line x1="626.5" y1="152" x2="626.5" y2="155" stroke="#5a5a5a" stroke-width="1"/><line x1="636.5" y1="148" x2="636.5" y2="155" stroke="#5a5a5a" stroke-width="1"/><text x="636.5" y="140.8" font-size="9.2" text-anchor="middle" fill="#1a1a1a" stroke="#1a1a1a" stroke-width="0.2" font-family="Liberation Sans">52</text><line x1="646.5" y1="152" x2="646.5" y2="155" stroke="#5a5a5a" stroke-width="1"/><line x1="656.5" y1="148" x2="656.5" y2="155" stroke="#5a5a5a" stroke-width="1"/><text x="656.5" y="140.8" font-size="9.2" text-anchor="middle" fill="#1a1a1a" stroke="#1a1a1a" stroke-width="0.2" font-family="Liberation Sans">54</text><line x1="666.5" y1="152" x2="666.5" y2="155" stroke="#5a5a5a" stroke-width="1"/><line x1="676.5" y1="148" x2="676.5" y2="155" stroke="#5a5a5a" stroke-width="1"/><text x="676.5" y="140.8" font-size="9.2" text-anchor="middle" fill="#1a1a1a" stroke="#1a1a1a" stroke-width="0.2" font-family="Liberation Sans">56</text><line x1="686.5" y1="152" x2="686.5" y2="155" stroke="#5a5a5a" stroke-width="1"/><line x1="696.5" y1="148" x2="696.5" y2="155" stroke="#5a5a5a" stroke-width="1"/><text x="696.5" y="140.8" font-size="9.2" text-anchor="middle" fill="#1a1a1a" stroke="#1a1a1a" stroke-width="0.2" font-family="Liberation Sans">58</text><line x1="706.5" y1="152" x2="706.5" y2="155" stroke="#5a5a5a" stroke-width="1"/><line x1="716.5" y1="148" x2="716.5" y2="155" stroke="#5a5a5a" stroke-width="1"/><text x="716.5" y="140.8" font-size="9.2" text-anchor="middle" fill="#1a1a1a" stroke="#1a1a1a" stroke-width="0.2" font-family="Liberation Sans">60</text><line x1="726.5" y1="152" x2="726.5" y2="155" stroke="#5a5a5a" stroke-width="1"/><line x1="736.5" y1="148" x2="736.5" y2="155" stroke="#5a5a5a" stroke-width="1"/><text x="736.5" y="140.8" font-size="9.2" text-anchor="middle" fill="#1a1a1a" stroke="#1a1a1a" stroke-width="0.2" font-family="Liberation Sans">62</text><line x1="746.5" y1="152" x2="746.5" y2="155" stroke="#5a5a5a" stroke-width="1"/><line x1="756.5" y1="148" x2="756.5" y2="155" stroke="#5a5a5a" stroke-width="1"/><text x="756.5" y="140.8" font-size="9.2" text-anchor="middle" fill="#1a1a1a" stroke="#1a1a1a" stroke-width="0.2" font-family="Liberation Sans">64</text><line x1="766.5" y1="152" x2="766.5" y2="155" stroke="#5a5a5a" stroke-width="1"/><line x1="776.5" y1="148" x2="776.5" y2="155" stroke="#5a5a5a" stroke-width="1"/><text x="776.5" y="140.8" font-size="9.2" text-anchor="middle" fill="#1a1a1a" stroke="#1a1a1a" stroke-width="0.2" font-family="Liberation Sans">66</text><line x1="786.5" y1="152" x2="786.5" y2="155" stroke="#5a5a5a" stroke-width="1"/><line x1="796.5" y1="148" x2="796.5" y2="155" stroke="#5a5a5a" stroke-width="1"/><text x="796.5" y="140.8" font-size="9.2" text-anchor="middle" fill="#1a1a1a" stroke="#1a1a1a" stroke-width="0.2" font-family="Liberation Sans">68</text><line x1="806.5" y1="152" x2="806.5" y2="155" stroke="#5a5a5a" stroke-width="1"/><line x1="816.5" y1="148" x2="816.5" y2="155" stroke="#5a5a5a" stroke-width="1"/><text x="816.5" y="140.8" font-size="9.2" text-anchor="middle" fill="#1a1a1a" stroke="#1a1a1a" stroke-width="0.2" font-family="Liberation Sans">70</text><line x1="826.5" y1="152" x2="826.5" y2="155" stroke="#5a5a5a" stroke-width="1"/><line x1="836.5" y1="148" x2="836.5" y2="155" stroke="#5a5a5a" stroke-width="1"/><text x="836.5" y="140.8" font-size="9.2" text-anchor="middle" fill="#1a1a1a" stroke="#1a1a1a" stroke-width="0.2" font-family="Liberation Sans">72</text><line x1="846.5" y1="152" x2="846.5" y2="155" stroke="#5a5a5a" stroke-width="1"/><line x1="856.5" y1="148" x2="856.5" y2="155" stroke="#5a5a5a" stroke-width="1"/><text x="856.5" y="140.8" font-size="9.2" text-anchor="middle" fill="#1a1a1a" stroke="#1a1a1a" stroke-width="0.2" font-family="Liberation Sans">74</text><line x1="866.5" y1="152" x2="866.5" y2="155" stroke="#5a5a5a" stroke-width="1"/><line x1="876.5" y1="148" x2="876.5" y2="155" stroke="#5a5a5a" stroke-width="1"/><text x="876.5" y="140.8" font-size="9.2" text-anchor="middle" fill="#1a1a1a" stroke="#1a1a1a" stroke-width="0.2" font-family="Liberation Sans">76</text><line x1="886.5" y1="152" x2="886.5" y2="155" stroke="#5a5a5a" stroke-width="1"/><line x1="896.5" y1="148" x2="896.5" y2="155" stroke="#5a5a5a" stroke-width="1"/><text x="896.5" y="140.8" font-size="9.2" text-anchor="middle" fill="#1a1a1a" stroke="#1a1a1a" stroke-width="0.2" font-family="Liberation Sans">78</text><line x1="906.5" y1="152" x2="906.5" y2="155" stroke="#5a5a5a" stroke-width="1"/><line x1="916.5" y1="148" x2="916.5" y2="155" stroke="#5a5a5a" stroke-width="1"/><text x="916.5" y="140.8" font-size="9.2" text-anchor="middle" fill="#1a1a1a" stroke="#1a1a1a" stroke-width="0.2" font-family="Liberation Sans">80</text><line x1="926.5" y1="152" x2="926.5" y2="155" stroke="#5a5a5a" stroke-width="1"/><line x1="936.5" y1="148" x2="936.5" y2="155" stroke="#5a5a5a" stroke-width="1"/><text x="936.5" y="140.8" font-size="9.2" text-anchor="middle" fill="#1a1a1a" stroke="#1a1a1a" stroke-width="0.2" font-family="Liberation Sans">82</text><line x1="946.5" y1="152" x2="946.5" y2="155" stroke="#5a5a5a" stroke-width="1"/><line x1="956.5" y1="148" x2="956.5" y2="155" stroke="#5a5a5a" stroke-width="1"/><text x="956.5" y="140.8" font-size="9.2" text-anchor="middle" fill="#1a1a1a" stroke="#1a1a1a" stroke-width="0.2" font-family="Liberation Sans">84</text><line x1="966.5" y1="152" x2="966.5" y2="155" stroke="#5a5a5a" stroke-width="1"/><line x1="976.5" y1="148" x2="976.5" y2="155" stroke="#5a5a5a" stroke-width="1"/><text x="976.5" y="140.8" font-size="9.2" text-anchor="middle" fill="#1a1a1a" stroke="#1a1a1a" stroke-width="0.2" font-family="Liberation Sans">86</text><line x1="986.5" y1="152" x2="986.5" y2="155" stroke="#5a5a5a" stroke-width="1"/><line x1="996.5" y1="148" x2="996.5" y2="155" stroke="#5a5a5a" stroke-width="1"/><text x="996.5" y="140.8" font-size="9.2" text-anchor="middle" fill="#1a1a1a" stroke="#1a1a1a" stroke-width="0.2" font-family="Liberation Sans">88</text><line x1="1006.5" y1="152" x2="1006.5" y2="155" stroke="#5a5a5a" stroke-width="1"/><line x1="1016.5" y1="148" x2="1016.5" y2="155" stroke="#5a5a5a" stroke-width="1"/><text x="1016.5" y="140.8" font-size="9.2" text-anchor="middle" fill="#1a1a1a" stroke="#1a1a1a" stroke-width="0.2" font-family="Liberation Sans">90</text><line x1="1026.5" y1="152" x2="1026.5" y2="155" stroke="#5a5a5a" stroke-width="1"/><line x1="1036.5" y1="148" x2="1036.5" y2="155" stroke="#5a5a5a" stroke-width="1"/><text x="1036.5" y="140.8" font-size="9.2" text-anchor="middle" fill="#1a1a1a" stroke="#1a1a1a" stroke-width="0.2" font-family="Liberation Sans">92</text><line x1="1046.5" y1="152" x2="1046.5" y2="155" stroke="#5a5a5a" stroke-width="1"/><line x1="1056.5" y1="148" x2="1056.5" y2="155" stroke="#5a5a5a" stroke-width="1"/><text x="1056.5" y="140.8" font-size="9.2" text-anchor="middle" fill="#1a1a1a" stroke="#1a1a1a" stroke-width="0.2" font-family="Liberation Sans">94</text><line x1="1066.5" y1="152" x2="1066.5" y2="155" stroke="#5a5a5a" stroke-width="1"/><line x1="1076.5" y1="148" x2="1076.5" y2="155" stroke="#5a5a5a" stroke-width="1"/><text x="1076.5" y="140.8" font-size="9.2" text-anchor="middle" fill="#1a1a1a" stroke="#1a1a1a" stroke-width="0.2" font-family="Liberation Sans">96</text><line x1="1086.5" y1="152" x2="1086.5" y2="155" stroke="#5a5a5a" stroke-width="1"/><line x1="1096.5" y1="148" x2="1096.5" y2="155" stroke="#5a5a5a" stroke-width="1"/><text x="1096.5" y="140.8" font-size="9.2" text-anchor="middle" fill="#1a1a1a" stroke="#1a1a1a" stroke-width="0.2" font-family="Liberation Sans">98</text><line x1="1106.5" y1="152" x2="1106.5" y2="155" stroke="#5a5a5a" stroke-width="1"/><line x1="1116.5" y1="148" x2="1116.5" y2="155" stroke="#5a5a5a" stroke-width="1"/><text x="1116.5" y="140.8" font-size="9.2" text-anchor="middle" fill="#1a1a1a" stroke="#1a1a1a" stroke-width="0.2" font-family="Liberation Sans">100</text><line x1="1126.5" y1="152" x2="1126.5" y2="155" stroke="#5a5a5a" stroke-width="1"/><line x1="1136.5" y1="148" x2="1136.5" y2="155" stroke="#5a5a5a" stroke-width="1"/><text x="1136.5" y="140.8" font-size="9.2" text-anchor="middle" fill="#1a1a1a" stroke="#1a1a1a" stroke-width="0.2" font-family="Liberation Sans">102</text><line x1="1146.5" y1="152" x2="1146.5" y2="155" stroke="#5a5a5a" stroke-width="1"/><line x1="1156.5" y1="148" x2="1156.5" y2="155" stroke="#5a5a5a" stroke-width="1"/><text x="1156.5" y="140.8" font-size="9.2" text-anchor="middle" fill="#1a1a1a" stroke="#1a1a1a" stroke-width="0.2" font-family="Liberation Sans">104</text><line x1="1166.5" y1="152" x2="1166.5" y2="155" stroke="#5a5a5a" stroke-width="1"/></g></svg><svg width="23" height="576" style="position:absolute;left:72px;top:155px"><g transform="translate(-72,-155)"><line x1="88" y1="753.5" x2="95" y2="753.5" stroke="#5a5a5a" stroke-width="1"/><text transform="translate(81.2,752.5) rotate(-90)" x="0" y="0" font-size="9.2" text-anchor="middle" fill="#1a1a1a" stroke="#1a1a1a" stroke-width="0.2" font-family="Liberation Sans">-22</text><line x1="92" y1="743.5" x2="95" y2="743.5" stroke="#5a5a5a" stroke-width="1"/><line x1="88" y1="733.5" x2="95" y2="733.5" stroke="#5a5a5a" stroke-width="1"/><text transform="translate(81.2,732.5) rotate(-90)" x="0" y="0" font-size="9.2" text-anchor="middle" fill="#1a1a1a" stroke="#1a1a1a" stroke-width="0.2" font-family="Liberation Sans">-20</text><line x1="92" y1="723.5" x2="95" y2="723.5" stroke="#5a5a5a" stroke-width="1"/><line x1="88" y1="713.5" x2="95" y2="713.5" stroke="#5a5a5a" stroke-width="1"/><text transform="translate(81.2,712.5) rotate(-90)" x="0" y="0" font-size="9.2" text-anchor="middle" fill="#1a1a1a" stroke="#1a1a1a" stroke-width="0.2" font-family="Liberation Sans">-18</text><line x1="92" y1="703.5" x2="95" y2="703.5" stroke="#5a5a5a" stroke-width="1"/><line x1="88" y1="693.5" x2="95" y2="693.5" stroke="#5a5a5a" stroke-width="1"/><text transform="translate(81.2,692.5) rotate(-90)" x="0" y="0" font-size="9.2" text-anchor="middle" fill="#1a1a1a" stroke="#1a1a1a" stroke-width="0.2" font-family="Liberation Sans">-16</text><line x1="92" y1="683.5" x2="95" y2="683.5" stroke="#5a5a5a" stroke-width="1"/><line x1="88" y1="673.5" x2="95" y2="673.5" stroke="#5a5a5a" stroke-width="1"/><text transform="translate(81.2,672.5) rotate(-90)" x="0" y="0" font-size="9.2" text-anchor="middle" fill="#1a1a1a" stroke="#1a1a1a" stroke-width="0.2" font-family="Liberation Sans">-14</text><line x1="92" y1="663.5" x2="95" y2="663.5" stroke="#5a5a5a" stroke-width="1"/><line x1="88" y1="653.5" x2="95" y2="653.5" stroke="#5a5a5a" stroke-width="1"/><text transform="translate(81.2,652.5) rotate(-90)" x="0" y="0" font-size="9.2" text-anchor="middle" fill="#1a1a1a" stroke="#1a1a1a" stroke-width="0.2" font-family="Liberation Sans">-12</text><line x1="92" y1="643.5" x2="95" y2="643.5" stroke="#5a5a5a" stroke-width="1"/><line x1="88" y1="633.5" x2="95" y2="633.5" stroke="#5a5a5a" stroke-width="1"/><text transform="translate(81.2,632.5) rotate(-90)" x="0" y="0" font-size="9.2" text-anchor="middle" fill="#1a1a1a" stroke="#1a1a1a" stroke-width="0.2" font-family="Liberation Sans">-10</text><line x1="92" y1="623.5" x2="95" y2="623.5" stroke="#5a5a5a" stroke-width="1"/><line x1="88" y1="613.5" x2="95" y2="613.5" stroke="#5a5a5a" stroke-width="1"/><text transform="translate(81.2,612.5) rotate(-90)" x="0" y="0" font-size="9.2" text-anchor="middle" fill="#1a1a1a" stroke="#1a1a1a" stroke-width="0.2" font-family="Liberation Sans">-8</text><line x1="92" y1="603.5" x2="95" y2="603.5" stroke="#5a5a5a" stroke-width="1"/><line x1="88" y1="593.5" x2="95" y2="593.5" stroke="#5a5a5a" stroke-width="1"/><text transform="translate(81.2,592.5) rotate(-90)" x="0" y="0" font-size="9.2" text-anchor="middle" fill="#1a1a1a" stroke="#1a1a1a" stroke-width="0.2" font-family="Liberation Sans">-6</text><line x1="92" y1="583.5" x2="95" y2="583.5" stroke="#5a5a5a" stroke-width="1"/><line x1="88" y1="573.5" x2="95" y2="573.5" stroke="#5a5a5a" stroke-width="1"/><text transform="translate(81.2,572.5) rotate(-90)" x="0" y="0" font-size="9.2" text-anchor="middle" fill="#1a1a1a" stroke="#1a1a1a" stroke-width="0.2" font-family="Liberation Sans">-4</text><line x1="92" y1="563.5" x2="95" y2="563.5" stroke="#5a5a5a" stroke-width="1"/><line x1="88" y1="553.5" x2="95" y2="553.5" stroke="#5a5a5a" stroke-width="1"/><text transform="translate(81.2,552.5) rotate(-90)" x="0" y="0" font-size="9.2" text-anchor="middle" fill="#1a1a1a" stroke="#1a1a1a" stroke-width="0.2" font-family="Liberation Sans">-2</text><line x1="92" y1="543.5" x2="95" y2="543.5" stroke="#5a5a5a" stroke-width="1"/><line x1="88" y1="533.5" x2="95" y2="533.5" stroke="#5a5a5a" stroke-width="1"/><text transform="translate(81.2,532.5) rotate(-90)" x="0" y="0" font-size="9.2" text-anchor="middle" fill="#1a1a1a" stroke="#1a1a1a" stroke-width="0.2" font-family="Liberation Sans">0</text><line x1="92" y1="523.5" x2="95" y2="523.5" stroke="#5a5a5a" stroke-width="1"/><line x1="88" y1="513.5" x2="95" y2="513.5" stroke="#5a5a5a" stroke-width="1"/><text transform="translate(81.2,512.5) rotate(-90)" x="0" y="0" font-size="9.2" text-anchor="middle" fill="#1a1a1a" stroke="#1a1a1a" stroke-width="0.2" font-family="Liberation Sans">2</text><line x1="92" y1="503.5" x2="95" y2="503.5" stroke="#5a5a5a" stroke-width="1"/><line x1="88" y1="493.5" x2="95" y2="493.5" stroke="#5a5a5a" stroke-width="1"/><text transform="translate(81.2,492.5) rotate(-90)" x="0" y="0" font-size="9.2" text-anchor="middle" fill="#1a1a1a" stroke="#1a1a1a" stroke-width="0.2" font-family="Liberation Sans">4</text><line x1="92" y1="483.5" x2="95" y2="483.5" stroke="#5a5a5a" stroke-width="1"/><line x1="88" y1="473.5" x2="95" y2="473.5" stroke="#5a5a5a" stroke-width="1"/><text transform="translate(81.2,472.5) rotate(-90)" x="0" y="0" font-size="9.2" text-anchor="middle" fill="#1a1a1a" stroke="#1a1a1a" stroke-width="0.2" font-family="Liberation Sans">6</text><line x1="92" y1="463.5" x2="95" y2="463.5" stroke="#5a5a5a" stroke-width="1"/><line x1="88" y1="453.5" x2="95" y2="453.5" stroke="#5a5a5a" stroke-width="1"/><text transform="translate(81.2,452.5) rotate(-90)" x="0" y="0" font-size="9.2" text-anchor="middle" fill="#1a1a1a" stroke="#1a1a1a" stroke-width="0.2" font-family="Liberation Sans">8</text><line x1="92" y1="443.5" x2="95" y2="443.5" stroke="#5a5a5a" stroke-width="1"/><line x1="88" y1="433.5" x2="95" y2="433.5" stroke="#5a5a5a" stroke-width="1"/><text transform="translate(81.2,432.5) rotate(-90)" x="0" y="0" font-size="9.2" text-anchor="middle" fill="#1a1a1a" stroke="#1a1a1a" stroke-width="0.2" font-family="Liberation Sans">10</text><line x1="92" y1="423.5" x2="95" y2="423.5" stroke="#5a5a5a" stroke-width="1"/><line x1="88" y1="413.5" x2="95" y2="413.5" stroke="#5a5a5a" stroke-width="1"/><text transform="translate(81.2,412.5) rotate(-90)" x="0" y="0" font-size="9.2" text-anchor="middle" fill="#1a1a1a" stroke="#1a1a1a" stroke-width="0.2" font-family="Liberation Sans">12</text><line x1="92" y1="403.5" x2="95" y2="403.5" stroke="#5a5a5a" stroke-width="1"/><line x1="88" y1="393.5" x2="95" y2="393.5" stroke="#5a5a5a" stroke-width="1"/><text transform="translate(81.2,392.5) rotate(-90)" x="0" y="0" font-size="9.2" text-anchor="middle" fill="#1a1a1a" stroke="#1a1a1a" stroke-width="0.2" font-family="Liberation Sans">14</text><line x1="92" y1="383.5" x2="95" y2="383.5" stroke="#5a5a5a" stroke-width="1"/><line x1="88" y1="373.5" x2="95" y2="373.5" stroke="#5a5a5a" stroke-width="1"/><text transform="translate(81.2,372.5) rotate(-90)" x="0" y="0" font-size="9.2" text-anchor="middle" fill="#1a1a1a" stroke="#1a1a1a" stroke-width="0.2" font-family="Liberation Sans">16</text><line x1="92" y1="363.5" x2="95" y2="363.5" stroke="#5a5a5a" stroke-width="1"/><line x1="88" y1="353.5" x2="95" y2="353.5" stroke="#5a5a5a" stroke-width="1"/><text transform="translate(81.2,352.5) rotate(-90)" x="0" y="0" font-size="9.2" text-anchor="middle" fill="#1a1a1a" stroke="#1a1a1a" stroke-width="0.2" font-family="Liberation Sans">18</text><line x1="92" y1="343.5" x2="95" y2="343.5" stroke="#5a5a5a" stroke-width="1"/><line x1="88" y1="333.5" x2="95" y2="333.5" stroke="#5a5a5a" stroke-width="1"/><text transform="translate(81.2,332.5) rotate(-90)" x="0" y="0" font-size="9.2" text-anchor="middle" fill="#1a1a1a" stroke="#1a1a1a" stroke-width="0.2" font-family="Liberation Sans">20</text><line x1="92" y1="323.5" x2="95" y2="323.5" stroke="#5a5a5a" stroke-width="1"/><line x1="88" y1="313.5" x2="95" y2="313.5" stroke="#5a5a5a" stroke-width="1"/><text transform="translate(81.2,312.5) rotate(-90)" x="0" y="0" font-size="9.2" text-anchor="middle" fill="#1a1a1a" stroke="#1a1a1a" stroke-width="0.2" font-family="Liberation Sans">22</text><line x1="92" y1="303.5" x2="95" y2="303.5" stroke="#5a5a5a" stroke-width="1"/><line x1="88" y1="293.5" x2="95" y2="293.5" stroke="#5a5a5a" stroke-width="1"/><text transform="translate(81.2,292.5) rotate(-90)" x="0" y="0" font-size="9.2" text-anchor="middle" fill="#1a1a1a" stroke="#1a1a1a" stroke-width="0.2" font-family="Liberation Sans">24</text><line x1="92" y1="283.5" x2="95" y2="283.5" stroke="#5a5a5a" stroke-width="1"/><line x1="88" y1="273.5" x2="95" y2="273.5" stroke="#5a5a5a" stroke-width="1"/><text transform="translate(81.2,272.5) rotate(-90)" x="0" y="0" font-size="9.2" text-anchor="middle" fill="#1a1a1a" stroke="#1a1a1a" stroke-width="0.2" font-family="Liberation Sans">26</text><line x1="92" y1="263.5" x2="95" y2="263.5" stroke="#5a5a5a" stroke-width="1"/><line x1="88" y1="253.5" x2="95" y2="253.5" stroke="#5a5a5a" stroke-width="1"/><text transform="translate(81.2,252.5) rotate(-90)" x="0" y="0" font-size="9.2" text-anchor="middle" fill="#1a1a1a" stroke="#1a1a1a" stroke-width="0.2" font-family="Liberation Sans">28</text><line x1="92" y1="243.5" x2="95" y2="243.5" stroke="#5a5a5a" stroke-width="1"/><line x1="88" y1="233.5" x2="95" y2="233.5" stroke="#5a5a5a" stroke-width="1"/><text transform="translate(81.2,232.5) rotate(-90)" x="0" y="0" font-size="9.2" text-anchor="middle" fill="#1a1a1a" stroke="#1a1a1a" stroke-width="0.2" font-family="Liberation Sans">30</text><line x1="92" y1="223.5" x2="95" y2="223.5" stroke="#5a5a5a" stroke-width="1"/><line x1="88" y1="213.5" x2="95" y2="213.5" stroke="#5a5a5a" stroke-width="1"/><text transform="translate(81.2,212.5) rotate(-90)" x="0" y="0" font-size="9.2" text-anchor="middle" fill="#1a1a1a" stroke="#1a1a1a" stroke-width="0.2" font-family="Liberation Sans">32</text><line x1="92" y1="203.5" x2="95" y2="203.5" stroke="#5a5a5a" stroke-width="1"/><line x1="88" y1="193.5" x2="95" y2="193.5" stroke="#5a5a5a" stroke-width="1"/><text transform="translate(81.2,192.5) rotate(-90)" x="0" y="0" font-size="9.2" text-anchor="middle" fill="#1a1a1a" stroke="#1a1a1a" stroke-width="0.2" font-family="Liberation Sans">34</text><line x1="92" y1="183.5" x2="95" y2="183.5" stroke="#5a5a5a" stroke-width="1"/><line x1="88" y1="173.5" x2="95" y2="173.5" stroke="#5a5a5a" stroke-width="1"/><text transform="translate(81.2,172.5) rotate(-90)" x="0" y="0" font-size="9.2" text-anchor="middle" fill="#1a1a1a" stroke="#1a1a1a" stroke-width="0.2" font-family="Liberation Sans">36</text><line x1="92" y1="163.5" x2="95" y2="163.5" stroke="#5a5a5a" stroke-width="1"/><line x1="88" y1="153.5" x2="95" y2="153.5" stroke="#5a5a5a" stroke-width="1"/><text transform="translate(81.2,152.5) rotate(-90)" x="0" y="0" font-size="9.2" text-anchor="middle" fill="#1a1a1a" stroke="#1a1a1a" stroke-width="0.2" font-family="Liberation Sans">38</text><line x1="92" y1="143.5" x2="95" y2="143.5" stroke="#5a5a5a" stroke-width="1"/></g></svg><div class="a" style="left:1138px;top:132px;width:16px;height:616px;background:#f8f8f8"></div><div class="a" style="left:95px;top:732px;width:1043px;height:16px;background:#f8f8f8"></div><div class="a" style="left:1154px;top:108px;width:1px;height:690px;background:#bdbdbd"></div><div class="a" style="left:72px;top:748px;width:1082px;height:2px;background:#c8c8c8"></div><div class="a" style="left:72px;top:750px;width:1082px;height:21px;background:#fff"></div><div class="a" style="left:72px;top:771px;width:1082px;height:28px;background:#ececec;border-top:1px solid #d0d0d0"></div><div class="a" style="left:138px;top:776px;width:988px;height:18px;background:#fff"></div><div class="a" style="left:1155px;top:108px;width:300px;height:691px;background:#fff"></div><div class="a" style="left:0;top:798px;width:1500px;height:46px;background:#dcdcdc;border-top:1px solid #e8e8e8"></div><svg class="a" style="left:77px;top:113px;" width="12" height="12" viewBox="0 0 12 12"><path d="M1.5,1.5 L10.5,10.5 M10.5,1.5 L1.5,10.5" stroke="#6a6a6a" stroke-width="1.1"/></svg><svg class="a" style="left:95px;top:112px;" width="15" height="15" viewBox="0 0 15 15"><circle cx="7" cy="7" r="6" fill="#f4f4f8" stroke="#2a3a8a" stroke-width="2"/><path d="M4,5 L9,9" stroke="#c03030" stroke-width="0.8"/><path d="M7,7 L12.5,12.5" stroke="#e8a020" stroke-width="2.2"/><circle cx="12.8" cy="12.8" r="1.2" fill="#e06060"/></svg><svg class="a" style="left:581px;top:111.16px;overflow:visible" width="102" height="17.1"><text x="2" y="12.540000000000001" font-family="Liberation Sans" font-size="11.4" font-weight="normal" fill="#1a1a1a" textLength="98" lengthAdjust="spacing" >* bond_washer.dxf</text></svg><svg class="a" style="left:85px;top:171px;" width="7" height="11" viewBox="0 0 7 11"><path d="M0,0 L6.5,5.5 L0,11 Z" fill="#000"/></svg><svg class="a" style="left:647px;top:145px;" width="11" height="7" viewBox="0 0 11 7"><path d="M0,0 L11,0 L5.5,6.5 Z" fill="#000"/></svg><div class="a" style="left:1143px;top:282px;width:8px;height:322px;border-radius:4px;background:#828282"></div><div class="a" style="left:280px;top:737px;width:634px;height:8px;border-radius:4px;background:#828282"></div><div class="a" style="left:1099px;top:733px;width:55px;height:14px;background:#e8e8e8"></div><svg class="a" style="left:1117px;top:731.25px;overflow:visible" width="38" height="18.75"><text x="2" y="13.750000000000002" font-family="Liberation Sans" font-size="12.5" font-weight="normal" fill="#222" textLength="34" lengthAdjust="spacingAndGlyphs" >1 &lt; 10</text></svg><svg class="a" style="left:74.8px;top:747.7px;overflow:visible" width="39.7" height="19.5"><text x="2" y="14.3" font-family="Liberation Sans" font-size="13" font-weight="normal" fill="#111" textLength="35.7" lengthAdjust="spacingAndGlyphs" >Undo:</text></svg><div class="a" style="left:1143px;top:750px;width:8px;height:18px;border-radius:4px;background:#828282"></div><svg class="a" style="left:71px;top:775.4000000000001px;overflow:visible" width="65" height="19.5"><text x="2" y="14.3" font-family="Liberation Sans" font-size="13" font-weight="normal" fill="#111" textLength="61" lengthAdjust="spacingAndGlyphs" >Comando:</text></svg><div class="a" style="left:1127px;top:772px;width:26px;height:25px;background:linear-gradient(#f4f4f4,#e4e4e4);border:1px solid #c4c4c4"></div><svg class="a" style="left:1131px;top:779px;" width="18" height="12" viewBox="0 0 18 12"><rect x="0.5" y="0.5" width="16" height="10" fill="#fff" stroke="#222" stroke-width="1"/><rect x="0" y="0" width="17" height="2.5" fill="#111"/></svg><div class="a" style="left:1154px;top:108px;width:2px;height:690px;background:#b8b8b8"></div><div class="a" style="left:1156px;top:108px;width:299px;height:22px;background:linear-gradient(#ececec,#dcdcdc)"></div><div class="a" style="left:1156px;top:130px;width:299px;height:1px;background:#c4c4c4"></div><svg class="a" style="left:1156.5px;top:110.5px;" width="15" height="15" viewBox="0 0 15 15"><circle cx="7.5" cy="7.5" r="7" fill="#6e6e6e"/><path d="M4.6,4.6 L10.4,10.4 M10.4,4.6 L4.6,10.4" stroke="#fff" stroke-width="1.9"/></svg><svg class="a" style="left:1174.5px;top:110.5px;" width="15" height="15" viewBox="0 0 15 15"><circle cx="7.5" cy="7.5" r="7" fill="#6e6e6e"/><rect x="6" y="4" width="5.5" height="4" fill="none" stroke="#fff" stroke-width="1.2"/><rect x="3.5" y="6.5" width="5.5" height="4" fill="#6e6e6e" stroke="#fff" stroke-width="1.2"/></svg><svg class="a" style="left:1279px;top:109.8px;overflow:visible" width="88" height="18.0"><text x="2" y="13.200000000000001" font-family="Liberation Sans" font-size="12" font-weight="normal" fill="#2a2a2a" textLength="84" lengthAdjust="spacingAndGlyphs" >Elenco dei livelli</text></svg><div class="a" style="left:1156px;top:131px;width:59px;height:25px;background:linear-gradient(#ececec,#f6f6f6);border-bottom:1.5px solid #b4b4b4"></div><div class="a" style="left:1214.5px;top:131px;width:1.5px;height:25px;background:#b4b4b4"></div><div class="a" style="left:1216px;top:131px;width:59px;height:25px;background:linear-gradient(#ececec,#f6f6f6);border-bottom:1.5px solid #b4b4b4"></div><div class="a" style="left:1274.5px;top:131px;width:1.5px;height:25px;background:#b4b4b4"></div><div class="a" style="left:1276px;top:131px;width:59px;height:25px;background:linear-gradient(#ececec,#f6f6f6);border-bottom:1.5px solid #b4b4b4"></div><div class="a" style="left:1334.5px;top:131px;width:1.5px;height:25px;background:#b4b4b4"></div><div class="a" style="left:1336px;top:131px;width:59px;height:25px;background:linear-gradient(#ececec,#f6f6f6);border-bottom:1.5px solid #b4b4b4"></div><div class="a" style="left:1394.5px;top:131px;width:1.5px;height:25px;background:#b4b4b4"></div><div class="a" style="left:1396px;top:131px;width:59px;height:25px;background:linear-gradient(#ececec,#f6f6f6);border-bottom:1.5px solid #b4b4b4"></div><svg class="a" style="left:1177px;top:136.2px;" width="16" height="13" viewBox="0 0 16 13"><g transform="translate(8,6.5) scale(1.0)"><path d="M-7.6,0.3 C-6,-4.8 -2,-5.8 0.5,-5.6 C4,-5.4 6.5,-3.5 7.6,-0.2 L6.6,0.6 C5,4.5 2,5.6 -0.2,5.6 C-3.5,5.6 -6,3.8 -7.6,0.3 Z" fill="#000"/><path d="M-5.3,-0.8 C-4,4.2 4,4.2 5.3,-0.8 C3.8,-2.6 -3.8,-2.6 -5.3,-0.8 Z" fill="#fff"/><circle cx="0" cy="-0.4" r="2.6" fill="#000"/><path d="M-0.8,-1.8 L-0.2,-0.6" stroke="#fff" stroke-width="0.6" opacity="0.5"/></g></svg><svg class="a" style="left:1237px;top:136.2px;" width="16" height="13" viewBox="0 0 16 13"><g transform="translate(8,6.5) scale(1.0)"><path d="M-7.6,0.3 C-6,-4.8 -2,-5.8 0.5,-5.6 C4,-5.4 6.5,-3.5 7.6,-0.2 L6.6,0.6 C5,4.5 2,5.6 -0.2,5.6 C-3.5,5.6 -6,3.8 -7.6,0.3 Z" fill="#a8a8a8"/><path d="M-5.3,-0.8 C-4,4.2 4,4.2 5.3,-0.8 C3.8,-2.6 -3.8,-2.6 -5.3,-0.8 Z" fill="#fff"/><circle cx="0" cy="-0.4" r="2.6" fill="#a8a8a8"/><path d="M-0.8,-1.8 L-0.2,-0.6" stroke="#fff" stroke-width="0.6" opacity="0.5"/></g></svg><svg class="a" style="left:1298px;top:136px;" width="13" height="13" viewBox="0 0 13 13"><path d="M6.5,0.5 L6.5,12.5 M0.5,6.5 L12.5,6.5" stroke="#e00000" stroke-width="2.6"/></svg><div class="a" style="left:1358px;top:141.5px;width:13px;height:3px;background:#e00000"></div><svg class="a" style="left:1415.0px;top:135.0px;" width="18" height="18" viewBox="0 0 18 18"><g transform="translate(1.5,16.5) rotate(-45)"><path d="M0,0 L4,-1.5 L15,-1.5 L15,1.5 L4,1.5 Z" fill="#e8a838" stroke="#8a5a10" stroke-width="0.6"/><rect x="14" y="-1.5" width="3.5" height="3.0" rx="0.8" fill="#e02828" stroke="#8a1010" stroke-width="0.5"/><path d="M0,0 L4,-1.5 L4,1.5 Z" fill="#f4dcb0"/><path d="M0,0 L1.6,-0.7 L1.6,0.7 Z" fill="#333"/></g></svg><div class="a" style="left:1161px;top:163px;width:16px;height:9px;background:#fff;border:1px solid #000"></div><svg class="a" style="left:1181.4px;top:157.01999999999998px;overflow:visible" width="10.599999999999909" height="19.200000000000003"><text x="2" y="14.080000000000002" font-family="Liberation Sans" font-size="12.8" font-weight="normal" fill="#111" textLength="6.599999999999909" lengthAdjust="spacingAndGlyphs" >0</text></svg><svg class="a" style="left:1415px;top:160.5px;" width="16" height="13" viewBox="0 0 16 13"><g transform="translate(8,6.5) scale(1.0)"><path d="M-7.6,0.3 C-6,-4.8 -2,-5.8 0.5,-5.6 C4,-5.4 6.5,-3.5 7.6,-0.2 L6.6,0.6 C5,4.5 2,5.6 -0.2,5.6 C-3.5,5.6 -6,3.8 -7.6,0.3 Z" fill="#000"/><path d="M-5.3,-0.8 C-4,4.2 4,4.2 5.3,-0.8 C3.8,-2.6 -3.8,-2.6 -5.3,-0.8 Z" fill="#fff"/><circle cx="0" cy="-0.4" r="2.6" fill="#000"/><path d="M-0.8,-1.8 L-0.2,-0.6" stroke="#fff" stroke-width="0.6" opacity="0.5"/></g></svg><svg class="a" style="left:1440px;top:160px;" width="10" height="14" viewBox="0 0 10 14"><path d="M1.8,7 L1.8,4.8 C1.8,1.9 3.4,0.6 5,0.6 C6.6,0.6 8.2,1.9 8.2,4.8 L8.2,7" fill="none" stroke="#b8b8b8" stroke-width="1.4"/><rect x="0" y="6.6" width="10" height="7.2" fill="#b8b8b8"/></svg><div class="a" style="left:1161px;top:183px;width:16px;height:9px;background:#ff0000;border:1px solid #000"></div><svg class="a" style="left:1181.4px;top:177.42px;overflow:visible" width="43.09999999999991" height="19.200000000000003"><text x="2" y="14.080000000000002" font-family="Liberation Sans" font-size="12.8" font-weight="normal" fill="#111" textLength="39.09999999999991" lengthAdjust="spacingAndGlyphs" >Center</text></svg><svg class="a" style="left:1415px;top:180.5px;" width="16" height="13" viewBox="0 0 16 13"><g transform="translate(8,6.5) scale(1.0)"><path d="M-7.6,0.3 C-6,-4.8 -2,-5.8 0.5,-5.6 C4,-5.4 6.5,-3.5 7.6,-0.2 L6.6,0.6 C5,4.5 2,5.6 -0.2,5.6 C-3.5,5.6 -6,3.8 -7.6,0.3 Z" fill="#000"/><path d="M-5.3,-0.8 C-4,4.2 4,4.2 5.3,-0.8 C3.8,-2.6 -3.8,-2.6 -5.3,-0.8 Z" fill="#fff"/><circle cx="0" cy="-0.4" r="2.6" fill="#000"/><path d="M-0.8,-1.8 L-0.2,-0.6" stroke="#fff" stroke-width="0.6" opacity="0.5"/></g></svg><svg class="a" style="left:1440px;top:180px;" width="10" height="14" viewBox="0 0 10 14"><path d="M1.8,7 L1.8,4.8 C1.8,1.9 3.4,0.6 5,0.6 C6.6,0.6 8.2,1.9 8.2,4.8 L8.2,7" fill="none" stroke="#b8b8b8" stroke-width="1.4"/><rect x="0" y="6.6" width="10" height="7.2" fill="#b8b8b8"/></svg><div class="a" style="left:1161px;top:203px;width:16px;height:9px;background:#000;border:1px solid #000"></div><svg class="a" style="left:1181.4px;top:197.32px;overflow:visible" width="45.59999999999991" height="19.200000000000003"><text x="2" y="14.080000000000002" font-family="Liberation Sans" font-size="12.8" font-weight="normal" fill="#111" textLength="41.59999999999991" lengthAdjust="spacingAndGlyphs" >Hidden</text></svg><svg class="a" style="left:1415px;top:200.5px;" width="16" height="13" viewBox="0 0 16 13"><g transform="translate(8,6.5) scale(1.0)"><path d="M-7.6,0.3 C-6,-4.8 -2,-5.8 0.5,-5.6 C4,-5.4 6.5,-3.5 7.6,-0.2 L6.6,0.6 C5,4.5 2,5.6 -0.2,5.6 C-3.5,5.6 -6,3.8 -7.6,0.3 Z" fill="#000"/><path d="M-5.3,-0.8 C-4,4.2 4,4.2 5.3,-0.8 C3.8,-2.6 -3.8,-2.6 -5.3,-0.8 Z" fill="#fff"/><circle cx="0" cy="-0.4" r="2.6" fill="#000"/><path d="M-0.8,-1.8 L-0.2,-0.6" stroke="#fff" stroke-width="0.6" opacity="0.5"/></g></svg><svg class="a" style="left:1440px;top:200px;" width="10" height="14" viewBox="0 0 10 14"><path d="M1.8,7 L1.8,4.8 C1.8,1.9 3.4,0.6 5,0.6 C6.6,0.6 8.2,1.9 8.2,4.8 L8.2,7" fill="none" stroke="#b8b8b8" stroke-width="1.4"/><rect x="0" y="6.6" width="10" height="7.2" fill="#b8b8b8"/></svg><div class="a" style="left:1161px;top:223px;width:16px;height:9px;background:#fff;border:1px solid #000"></div><svg class="a" style="left:1181.4px;top:216.92px;overflow:visible" width="42.59999999999991" height="19.200000000000003"><text x="2" y="14.080000000000002" font-family="Liberation Sans" font-size="12.8" font-weight="normal" fill="#111" textLength="38.59999999999991" lengthAdjust="spacingAndGlyphs" >Visible</text></svg><svg class="a" style="left:1415px;top:220.5px;" width="16" height="13" viewBox="0 0 16 13"><g transform="translate(8,6.5) scale(1.0)"><path d="M-7.6,0.3 C-6,-4.8 -2,-5.8 0.5,-5.6 C4,-5.4 6.5,-3.5 7.6,-0.2 L6.6,0.6 C5,4.5 2,5.6 -0.2,5.6 C-3.5,5.6 -6,3.8 -7.6,0.3 Z" fill="#000"/><path d="M-5.3,-0.8 C-4,4.2 4,4.2 5.3,-0.8 C3.8,-2.6 -3.8,-2.6 -5.3,-0.8 Z" fill="#fff"/><circle cx="0" cy="-0.4" r="2.6" fill="#000"/><path d="M-0.8,-1.8 L-0.2,-0.6" stroke="#fff" stroke-width="0.6" opacity="0.5"/></g></svg><svg class="a" style="left:1440px;top:220px;" width="10" height="14" viewBox="0 0 10 14"><path d="M1.8,7 L1.8,4.8 C1.8,1.9 3.4,0.6 5,0.6 C6.6,0.6 8.2,1.9 8.2,4.8 L8.2,7" fill="none" stroke="#b8b8b8" stroke-width="1.4"/><rect x="0" y="6.6" width="10" height="7.2" fill="#b8b8b8"/></svg><svg class="a" style="left:1392.0px;top:218.5px;" width="17" height="17" viewBox="0 0 17 17"><g transform="translate(1.5,15.5) rotate(-45)"><path d="M0,0 L4,-1.4 L14,-1.4 L14,1.4 L4,1.4 Z" fill="#e8a838" stroke="#8a5a10" stroke-width="0.6"/><rect x="13" y="-1.4" width="3.5" height="2.8" rx="0.8" fill="#e02828" stroke="#8a1010" stroke-width="0.5"/><path d="M0,0 L4,-1.4 L4,1.4 Z" fill="#f4dcb0"/><path d="M0,0 L1.6,-0.7 L1.6,0.7 Z" fill="#333"/></g></svg><div class="a" style="left:1455px;top:108px;width:45px;height:690px;background:linear-gradient(90deg,#ececec,#d0d0d0);border-left:1px solid #d8d8d8"></div><div class="a" style="left:1463px;top:116px;width:2px;height:2px;background:#a0a0a0"></div><div class="a" style="left:1469px;top:116px;width:2px;height:2px;background:#a0a0a0"></div><div class="a" style="left:1475px;top:116px;width:2px;height:2px;background:#a0a0a0"></div><div class="a" style="left:1481px;top:116px;width:2px;height:2px;background:#a0a0a0"></div><div class="a" style="left:1487px;top:116px;width:2px;height:2px;background:#a0a0a0"></div><div class="a" style="left:1456px;top:120px;width:43px;height:42.5px;border-radius:6px;background:#b6b6b6"></div><div class="a" style="left:1456px;top:417px;width:43px;height:42.5px;border-radius:6px;background:#b6b6b6"></div><div class="a" style="left:1459px;top:261px;width:1.5px;height:1.5px;background:#8a8a8a"></div><div class="a" style="left:1463px;top:261px;width:1.5px;height:1.5px;background:#8a8a8a"></div><div class="a" style="left:1467px;top:261px;width:1.5px;height:1.5px;background:#8a8a8a"></div><div class="a" style="left:1471px;top:261px;width:1.5px;height:1.5px;background:#8a8a8a"></div><div class="a" style="left:1475px;top:261px;width:1.5px;height:1.5px;background:#8a8a8a"></div><div class="a" style="left:1479px;top:261px;width:1.5px;height:1.5px;background:#8a8a8a"></div><div class="a" style="left:1483px;top:261px;width:1.5px;height:1.5px;background:#8a8a8a"></div><div class="a" style="left:1487px;top:261px;width:1.5px;height:1.5px;background:#8a8a8a"></div><div class="a" style="left:1491px;top:261px;width:1.5px;height:1.5px;background:#8a8a8a"></div><div class="a" style="left:1495px;top:261px;width:1.5px;height:1.5px;background:#8a8a8a"></div><div class="a" style="left:1459px;top:409px;width:1.5px;height:1.5px;background:#8a8a8a"></div><div class="a" style="left:1463px;top:409px;width:1.5px;height:1.5px;background:#8a8a8a"></div><div class="a" style="left:1467px;top:409px;width:1.5px;height:1.5px;background:#8a8a8a"></div><div class="a" style="left:1471px;top:409px;width:1.5px;height:1.5px;background:#8a8a8a"></div><div class="a" style="left:1475px;top:409px;width:1.5px;height:1.5px;background:#8a8a8a"></div><div class="a" style="left:1479px;top:409px;width:1.5px;height:1.5px;background:#8a8a8a"></div><div class="a" style="left:1483px;top:409px;width:1.5px;height:1.5px;background:#8a8a8a"></div><div class="a" style="left:1487px;top:409px;width:1.5px;height:1.5px;background:#8a8a8a"></div><div class="a" style="left:1491px;top:409px;width:1.5px;height:1.5px;background:#8a8a8a"></div><div class="a" style="left:1495px;top:409px;width:1.5px;height:1.5px;background:#8a8a8a"></div><svg class="a" style="left:1463px;top:127.5px;" width="28" height="28" viewBox="0 0 28 28"><rect x="0.5" y="0.5" width="27" height="27" fill="#fff" stroke="#333" stroke-width="1"/><rect x="0" y="0" width="28" height="5" fill="#000"/><rect x="1.2" y="1" width="3" height="3" fill="#fff"/><path d="M8,11 L15,8 L15,21 L8,24 Z" fill="#bbb" stroke="#444" stroke-width="0.7"/><path d="M10,10 L17,7 L17,20 L10,23 Z" fill="#ddd" stroke="#444" stroke-width="0.7"/><path d="M12,9 L22,6 L22,19 L12,22 Z" fill="#fff" stroke="#444" stroke-width="0.7"/><path d="M15,18 L19,10 L20,18 Z" fill="none" stroke="#e03030" stroke-width="0.8"/></svg><svg class="a" style="left:1463px;top:174px;" width="28" height="28" viewBox="0 0 28 28"><rect x="0.5" y="0.5" width="27" height="27" fill="#fff" stroke="#333" stroke-width="1"/><rect x="0" y="0" width="28" height="5" fill="#000"/><rect x="1.2" y="1" width="3" height="3" fill="#fff"/><rect x="7" y="10" width="10" height="8" fill="#f8eec0" stroke="#444" stroke-width="0.8"/><circle cx="17" cy="18" r="4.5" fill="#f8eec0" fill-opacity="0.85" stroke="#444" stroke-width="0.8"/></svg><svg class="a" style="left:1463px;top:220px;" width="28" height="28" viewBox="0 0 28 28"><rect x="0.5" y="0.5" width="27" height="27" fill="#fff" stroke="#333" stroke-width="1"/><rect x="0" y="0" width="28" height="5" fill="#000"/><rect x="1.2" y="1" width="3" height="3" fill="#fff"/><rect x="6" y="9" width="16" height="13" rx="2.5" fill="#f6f6f6" stroke="#b8c8e0" stroke-width="1"/></svg><svg class="a" style="left:1463px;top:276px;" width="28" height="28" viewBox="0 0 28 28"><rect x="0.5" y="0.5" width="27" height="27" fill="#fff" stroke="#333" stroke-width="1"/><rect x="0" y="0" width="28" height="5" fill="#000"/><rect x="1.2" y="1" width="3" height="3" fill="#fff"/><rect x="5" y="10" width="3.5" height="2.5" fill="#000"/><rect x="5" y="15" width="3.5" height="2.5" fill="#000"/><rect x="5" y="20" width="3.5" height="2.5" fill="#000"/><rect x="10" y="10" width="13" height="2.5" fill="none" stroke="#333" stroke-width="0.7"/><rect x="10" y="15" width="13" height="2.5" fill="none" stroke="#333" stroke-width="0.7"/><rect x="10" y="20" width="13" height="2.5" fill="none" stroke="#333" stroke-width="0.7"/></svg><svg class="a" style="left:1463px;top:322px;" width="28" height="28" viewBox="0 0 28 28"><rect x="0.5" y="0.5" width="27" height="27" fill="#fff" stroke="#333" stroke-width="1"/><rect x="0" y="0" width="28" height="5" fill="#000"/><rect x="1.2" y="1" width="3" height="3" fill="#fff"/><path d="M7,9 C7,7 21,7 21,9 L16,14 L16,22 L13,19 L13,14 Z" fill="#ddd" stroke="#333" stroke-width="0.8"/><ellipse cx="14" cy="8.5" rx="7" ry="1.5" fill="#aaa" stroke="#333" stroke-width="0.6"/></svg><svg class="a" style="left:1463px;top:368px;" width="28" height="28" viewBox="0 0 28 28"><rect x="0.5" y="0.5" width="27" height="27" fill="#fff" stroke="#333" stroke-width="1"/><rect x="0" y="0" width="28" height="5" fill="#000"/><rect x="1.2" y="1" width="3" height="3" fill="#fff"/><path d="M6,9 L11,12 L11,21 L6,24 Z" fill="#fff" stroke="#333" stroke-width="0.8"/><rect x="11" y="13" width="11" height="7" fill="#999" stroke="#333" stroke-width="0.6"/><path d="M4,16.5 L25,16.5" stroke="#e08080" stroke-width="0.6" stroke-dasharray="2 1"/></svg><svg class="a" style="left:1463px;top:424px;" width="28" height="28" viewBox="0 0 28 28"><rect x="0.5" y="0.5" width="27" height="27" fill="#fff" stroke="#333" stroke-width="1"/><rect x="0" y="0" width="28" height="5" fill="#000"/><rect x="1.2" y="1" width="3" height="3" fill="#fff"/><g fill="#999"><rect x="4" y="8" width="9" height="1.2"/><rect x="4" y="11" width="8" height="1.2"/><rect x="4" y="14" width="10" height="1.2"/><rect x="4" y="17" width="10" height="1.2"/></g><rect x="0.5" y="22" width="27" height="5.5" fill="#fff" stroke="#333" stroke-width="0.6"/><rect x="12" y="24" width="12" height="1.5" fill="#777"/></svg><svg class="a" style="left:1463px;top:471px;" width="28" height="28" viewBox="0 0 28 28"><rect x="0.5" y="0.5" width="27" height="27" fill="#fff" stroke="#333" stroke-width="1"/><rect x="0" y="0" width="28" height="5" fill="#000"/><rect x="1.2" y="1" width="3" height="3" fill="#fff"/><rect x="7.5" y="9" width="13" height="15" rx="1" fill="#c48a3a" stroke="#8a5a1a" stroke-width="0.6"/><rect x="9" y="11" width="10" height="11.5" fill="#f4f4f4"/><rect x="11" y="8" width="6" height="3" rx="1" fill="#999"/><g stroke="#ccc" stroke-width="0.7"><line x1="10.5" y1="14" x2="17.5" y2="14"/><line x1="10.5" y1="16" x2="17.5" y2="16"/><line x1="10.5" y1="18" x2="16.5" y2="18"/></g></svg><svg class="a" style="left:0.2999999999999998px;top:805.37px;overflow:visible" width="81.0" height="13.950000000000001"><text x="2" y="10.230000000000002" font-family="Liberation Sans" font-size="9.3" font-weight="normal" fill="#222" textLength="77.0" lengthAdjust="spacing" stroke="#222" stroke-width="0.15">53.5479,35.7341</text></svg><svg class="a" style="left:0.10000000000000009px;top:825.5699999999999px;overflow:visible" width="89.60000000000001" height="13.950000000000001"><text x="2" y="10.230000000000002" font-family="Liberation Sans" font-size="9.3" font-weight="normal" fill="#222" textLength="85.60000000000001" lengthAdjust="spacing" stroke="#222" stroke-width="0.15">@45.5479,25.7341</text></svg><div class="a" style="left:253px;top:802px;width:1px;height:40px;background:#8a8a8a"></div><div class="a" style="left:254px;top:802px;width:1px;height:40px;background:#f0f0f0"></div><svg class="a" style="left:254.3px;top:805.37px;overflow:visible" width="64.19999999999999" height="13.950000000000001"><text x="2" y="10.230000000000002" font-family="Liberation Sans" font-size="9.3" font-weight="normal" fill="#222" textLength="60.19999999999999" lengthAdjust="spacing" stroke="#222" stroke-width="0.15">64.3763&lt;34°</text></svg><svg class="a" style="left:254.3px;top:825.5699999999999px;overflow:visible" width="65.0" height="13.950000000000001"><text x="2" y="10.230000000000002" font-family="Liberation Sans" font-size="9.3" font-weight="normal" fill="#222" textLength="61.0" lengthAdjust="spacing" stroke="#222" stroke-width="0.15">@52.315&lt;29°</text></svg><div class="a" style="left:506px;top:819px;width:6px;height:6px;border-radius:3px;background:#c6c6c6"></div><div class="a" style="left:940px;top:819px;width:6px;height:6px;border-radius:3px;background:#c6c6c6"></div><div class="a" style="left:1269px;top:819px;width:6px;height:6px;border-radius:3px;background:#c6c6c6"></div><svg class="a" style="left:569.5px;top:809.77px;overflow:visible" width="130.89999999999998" height="13.950000000000001"><text x="2" y="10.230000000000002" font-family="Liberation Sans" font-size="9.3" font-weight="normal" fill="#222" textLength="126.89999999999998" lengthAdjust="spacing" stroke="#222" stroke-width="0.15">Selezionare entità o regione</text></svg><svg class="a" style="left:567px;top:820.27px;overflow:visible" width="133.39999999999998" height="13.950000000000001"><text x="2" y="10.230000000000002" font-family="Liberation Sans" font-size="9.3" font-weight="normal" fill="#222" textLength="129.39999999999998" lengthAdjust="spacing" stroke="#222" stroke-width="0.15">Spostare entità o riferimento</text></svg><svg class="a" style="left:716px;top:805px;" width="21" height="32" viewBox="0 0 21 32"><rect x="1.5" y="1.5" width="17" height="28.5" rx="8.5" fill="#fff" stroke="#333" stroke-width="1"/><path d="M1.8,13 C6,11.5 14,11.5 18.2,13" fill="none" stroke="#333" stroke-width="1"/><rect x="8.5" y="4" width="3.5" height="7" rx="1.7" fill="#fff" stroke="#333" stroke-width="0.9"/><line x1="10.2" y1="11" x2="10.2" y2="12.5" stroke="#333" stroke-width="0.9"/></svg><svg class="a" style="left:947.3px;top:809.67px;overflow:visible" width="87.20000000000005" height="13.950000000000001"><text x="2" y="10.230000000000002" font-family="Liberation Sans" font-size="9.3" font-weight="normal" fill="#222" textLength="83.20000000000005" lengthAdjust="spacing" stroke="#222" stroke-width="0.15">Entità selezionate:</text></svg><svg class="a" style="left:947.3px;top:819.77px;overflow:visible" width="86.70000000000005" height="13.950000000000001"><text x="2" y="10.230000000000002" font-family="Liberation Sans" font-size="9.3" font-weight="normal" fill="#222" textLength="82.70000000000005" lengthAdjust="spacing" stroke="#222" stroke-width="0.15">3 entità su 2 livelli</text></svg><svg class="a" style="left:398px;top:15px;" width="82" height="82" viewBox="0 0 82 82"><defs><radialGradient id="ring" cx="0.5" cy="0.5" r="0.5"><stop offset="0" stop-color="#ffffff" stop-opacity="0"/><stop offset="0.72" stop-color="#ffffff" stop-opacity="0.12"/><stop offset="0.8" stop-color="#c8d6e2" stop-opacity="0.5"/><stop offset="0.88" stop-color="#9fb6ca" stop-opacity="0.75"/><stop offset="0.95" stop-color="#a9bccd" stop-opacity="0.7"/><stop offset="1" stop-color="#b8c8d6" stop-opacity="0"/></radialGradient></defs><circle cx="41" cy="41" r="40" fill="url(#ring)"/></svg><svg class="a" style="left:438px;top:55px;" width="19" height="28" viewBox="0 0 19 28"><g transform="translate(1,1) scale(1.28)"><path d="M0.5,0.5 L0.5,16.5 L4.3,12.4 L8.1,20.4 L10.5,19.3 L7,11.9 L11.6,11.4 Z" fill="#fff" stroke="#000" stroke-width="0.9" stroke-linejoin="round"/></g></svg></body></html>
